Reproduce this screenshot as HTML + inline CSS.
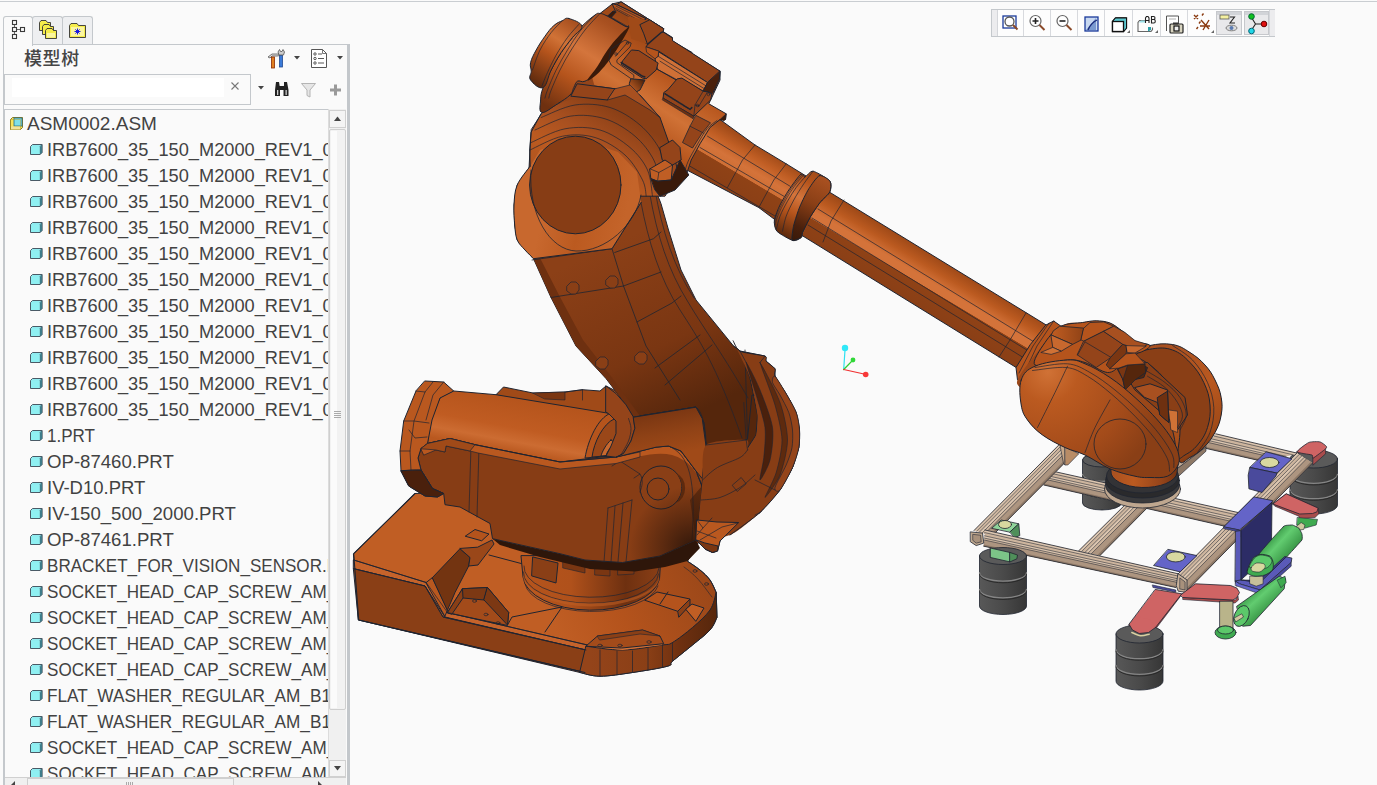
<!DOCTYPE html>
<html lang="zh">
<head>
<meta charset="utf-8">
<title>ASM0002.ASM</title>
<style>
html,body{margin:0;padding:0;}
body{width:1377px;height:785px;overflow:hidden;background:#fafafa;position:relative;font-family:"Liberation Sans","Noto Sans CJK SC",sans-serif;}
.abs{position:absolute;}
#topline{left:0;top:1px;width:1377px;height:1px;background:#c9cdd1;}
.tab{position:absolute;top:16px;height:29px;box-sizing:border-box;border:1px solid #c4c8cc;border-bottom:none;background:#eeeff1;border-radius:3px 3px 0 0;}
#tab1{left:3px;width:30px;background:#fafafa;height:30px;z-index:3;}
#tab2{left:32px;width:31px;}
#tab3{left:62px;width:31px;}
#panel{left:3px;top:44px;width:347px;height:741px;box-sizing:border-box;border-top:1px solid #c4c8cc;border-left:1px solid #c4c8cc;border-right:3px solid #c3c7cb;background:#fafafa;}
#title{left:24px;top:46.500px;font-size:18px;line-height:24px;color:#454545;font-weight:500;font-family:"Liberation Sans","Noto Sans CJK SC",sans-serif;letter-spacing:.6px;}
#search{left:4px;top:74px;width:247px;height:31px;box-sizing:border-box;border:1px solid #c4c8cc;background:#fafafa;}
#search i{position:absolute;left:7px;top:3px;width:212px;height:19px;background:#fff;}
#tree{left:4px;top:109px;width:325px;height:676px;box-sizing:border-box;border:1px solid #c4c8cc;border-bottom:none;background:#fafafa;overflow:hidden;}
.row{position:absolute;left:0;height:26px;line-height:26px;font-size:19px;color:#424242;white-space:nowrap;}
.row span{position:absolute;top:1px;display:inline-block;transform-origin:0 50%;}
.row svg{position:absolute;top:6px;}
#sb{left:328px;top:109px;width:18px;height:668px;background:#f0f0f0;border-left:1px solid #dcdcdc;box-sizing:border-box;}
#vp{left:0;top:0;}
</style>
</head>
<body>
<div id="topline" class="abs"></div>
<svg id="vp" class="abs" width="1377" height="785" viewBox="0 0 1377 785">
<defs>
<linearGradient id="gBal" gradientUnits="userSpaceOnUse" x1="520" y1="398" x2="510" y2="452"><stop offset="0" stop-color="#b5541c"/><stop offset=".55" stop-color="#c05c22"/><stop offset=".8" stop-color="#cc6c32"/><stop offset="1" stop-color="#b9581f"/></linearGradient>
<linearGradient id="gPed" gradientUnits="userSpaceOnUse" x1="523" y1="0" x2="660" y2="0"><stop offset="0" stop-color="#b5541c"/><stop offset=".35" stop-color="#b0511b"/><stop offset=".75" stop-color="#6e3010"/><stop offset="1" stop-color="#8a3f16"/></linearGradient>
<linearGradient id="gShoulder" gradientUnits="userSpaceOnUse" x1="515" y1="215" x2="620" y2="240"><stop offset="0" stop-color="#c8682e"/><stop offset=".25" stop-color="#c8682e"/><stop offset=".6" stop-color="#bb5a20"/><stop offset="1" stop-color="#c4642a"/></linearGradient>
<linearGradient id="gArm" gradientUnits="userSpaceOnUse" x1="600" y1="250" x2="680" y2="420"><stop offset="0" stop-color="#8c4017"/><stop offset=".6" stop-color="#7a3612"/><stop offset="1" stop-color="#55260c"/></linearGradient>
<linearGradient id="gTube" gradientUnits="userSpaceOnUse" x1="900" y1="236" x2="870" y2="286"><stop offset="0" stop-color="#a04a18"/><stop offset=".2" stop-color="#bb5a20"/><stop offset=".4" stop-color="#d4733a"/><stop offset=".52" stop-color="#d4733a"/><stop offset=".53" stop-color="#8f4216"/><stop offset=".92" stop-color="#8a3f16"/><stop offset="1" stop-color="#6e3010"/></linearGradient>
<linearGradient id="gTube1" gradientUnits="userSpaceOnUse" x1="770" y1="152" x2="738" y2="206"><stop offset="0" stop-color="#a04a18"/><stop offset=".2" stop-color="#c05e24"/><stop offset=".4" stop-color="#d4733a"/><stop offset=".55" stop-color="#cf6f35"/><stop offset=".56" stop-color="#8f4216"/><stop offset=".92" stop-color="#8a3f16"/><stop offset="1" stop-color="#6e3010"/></linearGradient>
<radialGradient id="gLobe" gradientUnits="userSpaceOnUse" cx="1050" cy="375" r="130"><stop offset="0" stop-color="#cc6a30"/><stop offset=".35" stop-color="#b9581f"/><stop offset="1" stop-color="#8c4017"/></radialGradient>
<linearGradient id="gDiscR" gradientUnits="userSpaceOnUse" x1="1150" y1="360" x2="1225" y2="430"><stop offset="0" stop-color="#b5541c"/><stop offset=".6" stop-color="#b9581f"/><stop offset="1" stop-color="#7a3612"/></linearGradient>
<linearGradient id="gCup" gradientUnits="userSpaceOnUse" x1="0" y1="0" x2="1" y2="0" gradientTransform="scale(1)"><stop offset="0" stop-color="#555"/><stop offset="1" stop-color="#3a3a3a"/></linearGradient>
<linearGradient id="gGreen" gradientUnits="userSpaceOnUse" x1="1262" y1="560" x2="1282" y2="580"><stop offset="0" stop-color="#2f9a3f"/><stop offset=".4" stop-color="#5cc86a"/><stop offset="1" stop-color="#2f8f3c"/></linearGradient>
</defs>
<g stroke="#1f2430" stroke-width="1" stroke-linejoin="round" stroke-linecap="round">
<g id="gripper" stroke-width=".8">
<defs><linearGradient id="gCupH" x1="0" y1="0" x2="1" y2="0"><stop offset="0" stop-color="#585858"/><stop offset=".5" stop-color="#4a4a4a"/><stop offset="1" stop-color="#363636"/></linearGradient></defs>
<path d="M1290.0 459V505A23.75 9 0 0 0 1337.5 505V459Z" fill="url(#gCupH)"/><ellipse cx="1313.75" cy="459" rx="23.75" ry="9" fill="#5a5a5a"/><path d="M1290.0 474.3333333333333A23.75 9 0 0 0 1337.5 474.3333333333333" fill="none" stroke="#858585" stroke-width="1.3"/><path d="M1290.0 475.93333333333334A23.75 9 0 0 0 1337.5 475.93333333333334" fill="none" stroke="#262626" stroke-width=".9"/><path d="M1290.0 489.6666666666667A23.75 9 0 0 0 1337.5 489.6666666666667" fill="none" stroke="#858585" stroke-width="1.3"/><path d="M1290.0 491.2666666666667A23.75 9 0 0 0 1337.5 491.2666666666667" fill="none" stroke="#262626" stroke-width=".9"/>
<path d="M1082.5 460V503A19.5 7 0 0 0 1121.5 503V460Z" fill="url(#gCupH)"/><ellipse cx="1102" cy="460" rx="19.5" ry="7" fill="#5a5a5a"/><path d="M1082.5 474.3333333333333A19.5 7 0 0 0 1121.5 474.3333333333333" fill="none" stroke="#858585" stroke-width="1.3"/><path d="M1082.5 475.93333333333334A19.5 7 0 0 0 1121.5 475.93333333333334" fill="none" stroke="#262626" stroke-width=".9"/><path d="M1082.5 488.6666666666667A19.5 7 0 0 0 1121.5 488.6666666666667" fill="none" stroke="#858585" stroke-width="1.3"/><path d="M1082.5 490.2666666666667A19.5 7 0 0 0 1121.5 490.2666666666667" fill="none" stroke="#262626" stroke-width=".9"/>
<path d="M1273.1 503.8L1286.2 493.8L1318.1 508.1L1318.8 513.8L1315.0 517.5L1300.0 518.8L1298.8 516.2L1275.0 506.2Z" fill="#a84c4c" stroke-width=".6"/>
<path d="M1273.1 503.8L1286.2 493.8L1318.1 508.1L1316.9 511.9L1312.5 513.5L1300.0 514.0Z" fill="#cf6464" />
<path d="M1297.5 517.5L1317.5 519.4L1316.2 525.0L1305.0 528.1L1296.9 525.0Z" fill="#3faa50" stroke-width=".6"/>
<path d="M1295.6 526.9L1301.2 522.5L1305.0 525.0L1303.8 529.4L1300.0 530.0Z" fill="#cfc8a0" stroke-width=".6"/>
<path d="M1215.8 433.8L1299.0 453.6L1263.0 461.4L1204.5 448.1Z" fill="#cdb59e" stroke="none"/><path d="M1215.8 433.8L1299.0 453.6L1293.2 454.8L1214.0 436.0Z" fill="#dcc6b0" stroke="none"/><path d="M1211.7 438.9L1286.0 456.4L1281.0 457.5L1210.1 440.9Z" fill="#dcc6b0" stroke="none"/><path d="M1208.8 442.6L1276.7 458.4L1263.0 461.4L1204.5 448.1Z" fill="#ad9580" stroke="none"/><path d="M1205.6 446.7L1266.6 460.6L1263.0 461.4L1204.5 448.1Z" fill="#8d7866" stroke="none"/><path d="M1215.8 433.8L1299.0 453.6" fill="none" stroke-width="0.8"/><path d="M1214.0 436.0L1293.2 454.8" fill="none" stroke-width="0.55"/><path d="M1211.7 438.9L1286.0 456.4" fill="none" stroke-width="0.55"/><path d="M1210.1 440.9L1281.0 457.5" fill="none" stroke-width="0.55"/><path d="M1208.8 442.6L1276.7 458.4" fill="none" stroke-width="0.55"/><path d="M1204.5 448.1L1263.0 461.4" fill="none" stroke-width="0.8"/>
<path d="M1173.2 462.5L1205.8 442.5L1206.0 446.9L1173.9 471.2Z" fill="#c4ad97" stroke-width=".6"/>
<path d="M1173.9 471.2L1206.0 446.9L1206.0 451.2L1174.5 480.0Z" fill="#8d7866" stroke-width=".6"/>
<path d="M1047.5 470.0L1238.0 512.5L1226.0 526.5L1043.8 485.0Z" fill="#cdb59e" stroke="none"/><path d="M1047.5 470.0L1238.0 512.5L1236.1 514.7L1046.9 472.4Z" fill="#dcc6b0" stroke="none"/><path d="M1046.2 475.4L1233.7 517.5L1232.0 519.5L1045.6 477.5Z" fill="#dcc6b0" stroke="none"/><path d="M1045.2 479.3L1230.6 521.2L1226.0 526.5L1043.8 485.0Z" fill="#ad9580" stroke="none"/><path d="M1044.1 483.5L1227.2 525.1L1226.0 526.5L1043.8 485.0Z" fill="#8d7866" stroke="none"/><path d="M1047.5 470.0L1238.0 512.5" fill="none" stroke-width="0.8"/><path d="M1046.9 472.4L1236.1 514.7" fill="none" stroke-width="0.55"/><path d="M1046.2 475.4L1233.7 517.5" fill="none" stroke-width="0.55"/><path d="M1045.6 477.5L1232.0 519.5" fill="none" stroke-width="0.55"/><path d="M1045.2 479.3L1230.6 521.2" fill="none" stroke-width="0.55"/><path d="M1043.8 485.0L1226.0 526.5" fill="none" stroke-width="0.8"/>
<path d="M1078.5 551.0L1138.0 492.0L1158.0 497.0L1100.0 555.5Z" fill="#cdb59e" stroke="none"/><path d="M1078.5 551.0L1138.0 492.0L1140.8 492.7L1081.5 551.6Z" fill="#dcc6b0" stroke="none"/><path d="M1085.0 552.4L1144.0 493.5L1147.0 494.2L1088.2 553.0Z" fill="#dcc6b0" stroke="none"/><path d="M1091.4 553.7L1150.0 495.0L1158.0 497.0L1100.0 555.5Z" fill="#ad9580" stroke="none"/><path d="M1097.4 555.0L1155.6 496.4L1158.0 497.0L1100.0 555.5Z" fill="#8d7866" stroke="none"/><path d="M1078.5 551.0L1138.0 492.0" fill="none" stroke-width="0.8"/><path d="M1081.5 551.6L1140.8 492.7" fill="none" stroke-width="0.55"/><path d="M1085.0 552.4L1144.0 493.5" fill="none" stroke-width="0.55"/><path d="M1088.2 553.0L1147.0 494.2" fill="none" stroke-width="0.55"/><path d="M1091.4 553.7L1150.0 495.0" fill="none" stroke-width="0.55"/><path d="M1100.0 555.5L1158.0 497.0" fill="none" stroke-width="0.8"/>
<path d="M974.0 530.5L1060.0 443.8L1066.0 461.5L992.0 536.0Z" fill="#cdb59e" stroke="none"/><path d="M974.0 530.5L1060.0 443.8L1060.8 446.2L976.5 531.3Z" fill="#dcc6b0" stroke="none"/><path d="M979.4 532.1L1061.8 449.1L1062.7 451.7L982.1 533.0Z" fill="#dcc6b0" stroke="none"/><path d="M984.8 533.8L1063.6 454.4L1066.0 461.5L992.0 536.0Z" fill="#ad9580" stroke="none"/><path d="M989.8 535.3L1065.3 459.4L1066.0 461.5L992.0 536.0Z" fill="#8d7866" stroke="none"/><path d="M974.0 530.5L1060.0 443.8" fill="none" stroke-width="0.8"/><path d="M976.5 531.3L1060.8 446.2" fill="none" stroke-width="0.55"/><path d="M979.4 532.1L1061.8 449.1" fill="none" stroke-width="0.55"/><path d="M982.1 533.0L1062.7 451.7" fill="none" stroke-width="0.55"/><path d="M984.8 533.8L1063.6 454.4" fill="none" stroke-width="0.55"/><path d="M992.0 536.0L1066.0 461.5" fill="none" stroke-width="0.8"/>
<path d="M1060.0 443.8L1065.0 446.9L1065.2 465.0L1063.8 463.8Z" fill="#c9a888" stroke-width=".6"/>
<path d="M1065.2 446.9L1078.8 453.8L1067.8 465.0L1065.2 465.0Z" fill="#b98c66" stroke-width=".6"/>
<path d="M991.9 528.1L1001.2 520.0L1018.8 523.8L1010.0 531.9Z" fill="#8fd49a" />
<path d="M1010.0 531.9L1018.8 523.8L1019.8 535.6L1015.0 537.5Z" fill="#4f8f5a" />
<ellipse cx="1005" cy="524.500" rx="6.500" ry="4" fill="#d8d8a0"/>
<path d="M1178.2 573.8L1296.9 453.1L1312.5 463.1L1187.6 590.0Z" fill="#cdb59e" stroke="none"/><path d="M1178.2 573.8L1296.9 453.1L1299.1 454.5L1179.6 576.0Z" fill="#dcc6b0" stroke="none"/><path d="M1181.1 578.6L1301.6 456.1L1303.9 457.6L1182.5 581.1Z" fill="#dcc6b0" stroke="none"/><path d="M1183.9 583.5L1306.3 459.1L1312.5 463.1L1187.6 590.0Z" fill="#ad9580" stroke="none"/><path d="M1186.5 588.0L1310.6 461.9L1312.5 463.1L1187.6 590.0Z" fill="#8d7866" stroke="none"/><path d="M1178.2 573.8L1296.9 453.1" fill="none" stroke-width="0.8"/><path d="M1179.6 576.0L1299.1 454.5" fill="none" stroke-width="0.55"/><path d="M1181.1 578.6L1301.6 456.1" fill="none" stroke-width="0.55"/><path d="M1182.5 581.1L1303.9 457.6" fill="none" stroke-width="0.55"/><path d="M1183.9 583.5L1306.3 459.1" fill="none" stroke-width="0.55"/><path d="M1187.6 590.0L1312.5 463.1" fill="none" stroke-width="0.8"/>
<path d="M985.0 530.0L1178.2 573.8L1175.8 587.5L983.7 546.2Z" fill="#cdb59e" stroke="none"/><path d="M985.0 530.0L1178.2 573.8L1177.8 576.0L984.8 532.6Z" fill="#dcc6b0" stroke="none"/><path d="M984.5 535.8L1177.3 578.7L1177.0 580.6L984.4 538.1Z" fill="#dcc6b0" stroke="none"/><path d="M984.2 540.0L1176.7 582.3L1175.8 587.5L983.7 546.2Z" fill="#ad9580" stroke="none"/><path d="M983.8 544.6L1176.0 586.1L1175.8 587.5L983.7 546.2Z" fill="#8d7866" stroke="none"/><path d="M985.0 530.0L1178.2 573.8" fill="none" stroke-width="0.8"/><path d="M984.8 532.6L1177.8 576.0" fill="none" stroke-width="0.55"/><path d="M984.5 535.8L1177.3 578.7" fill="none" stroke-width="0.55"/><path d="M984.4 538.1L1177.0 580.6" fill="none" stroke-width="0.55"/><path d="M984.2 540.0L1176.7 582.3" fill="none" stroke-width="0.55"/><path d="M983.7 546.2L1175.8 587.5" fill="none" stroke-width="0.8"/>
<path d="M970.6 531.9L982.5 533.1L983.8 543.1L976.2 545.6L970.6 541.9Z" fill="#bfa88f" />
<path d="M973.1 534.4L980.6 535.2L981.2 541.9L976.2 543.1L973.1 540.6Z" fill="#a8917c" stroke-width=".6"/>
<path d="M1178.2 573.8L1187.0 580.0L1187.0 592.5L1178.2 591.2L1176.4 586.2Z" fill="#c8b19a" />
<path d="M1180.1 578.1L1185.1 581.9L1185.1 590.0L1180.1 589.0Z" fill="#a8917c" stroke-width=".6"/>
<path d="M979.5 556V606A23.5 8.5 0 0 0 1026.5 606V556Z" fill="url(#gCupH)"/><ellipse cx="1003" cy="556" rx="23.5" ry="8.5" fill="#5a5a5a"/><path d="M979.5 572.6666666666666A23.5 8.5 0 0 0 1026.5 572.6666666666666" fill="none" stroke="#858585" stroke-width="1.3"/><path d="M979.5 574.2666666666667A23.5 8.5 0 0 0 1026.5 574.2666666666667" fill="none" stroke="#262626" stroke-width=".9"/><path d="M979.5 589.3333333333334A23.5 8.5 0 0 0 1026.5 589.3333333333334" fill="none" stroke="#858585" stroke-width="1.3"/><path d="M979.5 590.9333333333334A23.5 8.5 0 0 0 1026.5 590.9333333333334" fill="none" stroke="#262626" stroke-width=".9"/>
<path d="M990.6 548.1L1010.0 552.5L1010.0 561.9L990.6 557.5Z" fill="#7cc488" />
<path d="M1010.0 552.5L1017.5 555.0L1016.9 558.8L1010.0 561.9Z" fill="#4f8f5a" />
<path d="M1266.4 451.9L1292.0 458.8L1277.0 473.1L1250.1 467.5Z" fill="#6464c8" />
<path d="M1250.1 467.5L1277.0 473.1L1275.8 476.2L1262.0 492.5L1248.9 488.8L1248.2 475.6Z" fill="#4a4a9c" />
<ellipse cx="1269.500" cy="462.500" rx="9.400" ry="5" fill="#d8d8a0"/>
<path d="M1168.2 549.4L1197.0 555.6L1180.1 571.9L1153.9 565.6Z" fill="#6464c8" />
<ellipse cx="1175.750" cy="556.900" rx="9.400" ry="5" fill="#d8d8a0"/>
<path d="M1152.6 585.0L1175.8 590.0L1175.8 592.2L1153.2 587.5Z" fill="#4a4a9c" stroke-width=".6"/>
<path d="M1313.1 456.9L1325.6 447.5L1325.6 453.8L1313.1 465.0Z" fill="#a84c4c" stroke-width=".6"/>
<path d="M1296.9 451.9C1296.6 450.6 1306.5 443.5 1308.8 442.5C1311.1 441.5 1318.3 441.5 1320.0 441.9C1321.7 442.3 1325.6 445.5 1326.2 446.2C1326.8 446.9 1326.9 447.6 1325.6 448.8C1324.3 450.0 1314.5 457.5 1313.1 458.1C1311.7 458.7 1313.5 455.6 1311.9 455.0C1310.3 454.4 1297.2 453.1 1296.9 451.9Z" fill="#cf6464" />
<path d="M1250.8 500.0L1253.9 496.9L1272.6 500.6L1272.0 502.5L1239.5 530.0L1223.9 526.9Z" fill="#6464c8" />
<path d="M1223.9 526.9L1239.5 530.0L1239.5 531.9L1223.9 528.8Z" fill="#4a4a9c" stroke-width=".5"/>
<path d="M1272.0 502.5L1271.4 552.5L1240.8 580.0L1240.8 530.6Z" fill="#2c2c66" />
<path d="M1235.8 531.2L1240.8 530.6L1240.8 580.0L1237.0 586.2L1235.1 581.2Z" fill="#5a5ab8" />
<defs><linearGradient id="gGr1" gradientUnits="userSpaceOnUse" x1="1268" y1="540" x2="1290" y2="560"><stop offset="0" stop-color="#3a9a48"/><stop offset=".35" stop-color="#62cc70"/><stop offset="1" stop-color="#2f8a3c"/></linearGradient><linearGradient id="gGr2" gradientUnits="userSpaceOnUse" x1="1252" y1="590" x2="1272" y2="612"><stop offset="0" stop-color="#3a9a48"/><stop offset=".35" stop-color="#62cc70"/><stop offset="1" stop-color="#2f8a3c"/></linearGradient></defs>
<path d="M1283.1 526.9C1284.5 525.4 1285.7 525.5 1286.2 525.4C1286.7 525.3 1291.9 524.9 1292.5 525.0C1293.1 525.1 1298.3 527.7 1298.8 528.1C1299.3 528.5 1301.7 533.2 1301.9 533.8C1302.1 534.4 1302.7 538.8 1301.9 540.0C1301.1 541.2 1287.5 556.0 1286.2 557.5C1284.9 559.0 1276.4 570.1 1275.0 570.0C1273.6 569.9 1257.7 557.8 1258.1 555.6C1258.5 553.4 1281.7 528.4 1283.1 526.9Z" fill="url(#gGr1)" />
<path d="M1235.6 581.2L1239.4 583.8L1260.0 590.0L1291.2 562.5L1291.9 558.1L1286.2 556.9L1260.0 582.5L1241.2 580.0Z" fill="#5a5ab8" />
<path d="M1241.2 580.0L1260.0 582.5L1286.2 556.9L1285.0 556.2L1258.8 580.0Z" fill="#3a3a88" stroke-width=".6"/>
<path d="M1235.6 581.2L1239.4 583.8L1260.0 590.0L1260.0 594.0L1235.6 585.6Z" fill="#6464c8" stroke-width=".6"/>
<path d="M1260.0 590.0L1291.2 562.5L1291.2 566.2L1260.0 594.0Z" fill="#4a4a9c" stroke-width=".6"/>
<path d="M1250.0 576.2L1263.1 576.2L1263.1 583.8L1256.2 586.2L1250.0 583.8Z" fill="#c8c09a" stroke-width=".6"/>
<path d="M1247.5 570.0C1248.1 568.0 1250.8 560.9 1252.5 558.8C1254.2 556.7 1257.7 554.7 1260.0 554.4C1262.3 554.1 1268.3 555.1 1270.0 556.2C1271.7 557.3 1272.8 560.7 1273.1 562.5C1273.4 564.3 1273.6 568.3 1272.5 570.0C1271.4 571.7 1267.3 574.2 1265.0 575.0C1262.7 575.8 1257.3 576.4 1255.0 576.2C1252.7 576.0 1249.1 574.6 1248.1 573.8C1247.1 573.0 1246.9 572.0 1247.5 570.0Z" fill="#3faa50" />
<path d="M1249.4 566.9C1249.0 565.3 1252.9 559.7 1254.4 558.1C1255.9 556.5 1258.6 555.2 1260.6 555.0C1262.6 554.8 1267.9 556.0 1269.4 556.9C1270.9 557.8 1272.2 560.5 1271.9 561.9C1271.6 563.3 1269.4 566.4 1267.5 567.5C1265.6 568.6 1259.9 570.1 1257.5 570.0C1255.1 569.9 1249.8 568.5 1249.4 566.9Z" fill="#5cc86a" stroke-width=".6"/>
<path d="M1251.2 567.5C1251.7 566.4 1254.5 563.6 1256.2 563.1C1257.9 562.6 1262.6 563.2 1263.8 563.8C1265.0 564.4 1265.5 566.4 1265.0 567.5C1264.5 568.6 1261.7 571.4 1260.0 571.9C1258.3 572.4 1253.7 571.8 1252.5 571.2C1251.3 570.6 1250.7 568.6 1251.2 567.5Z" fill="#d8d8a0" stroke-width=".6"/>
<path d="M1236.8 606.2L1279.2 576.2L1285.5 578.8L1284.2 588.8L1250.5 625.5L1243.0 626.2Z" fill="url(#gGr2)" />
<ellipse cx="1241.500" cy="616" rx="7" ry="11" fill="#5cc86a" transform="rotate(25 1241.500 616)"/>
<path d="M1234.2 618.0L1241.8 613.8L1243.5 617.0L1236.0 621.8Z" fill="#d0c8a0" stroke-width=".6"/>
<path d="M1277.5 580.0L1285.0 576.2L1286.2 582.5L1281.2 587.5Z" fill="#3faa50" stroke-width=".6"/>
<path d="M1183.0 597.5L1235.5 600.0L1238.0 596.2L1238.5 600.0L1235.0 603.0L1183.0 599.5Z" fill="#a84c4c" stroke-width=".6"/>
<path d="M1180.5 595.0L1195.5 583.8L1230.5 585.5L1236.8 588.0L1239.5 592.5L1236.8 597.5L1233.0 600.0L1183.0 597.5Z" fill="#cf6464" />
<path d="M1156.0 591.2L1180.5 596.2L1154.5 630.5L1146.8 635.0L1136.8 635.0L1130.5 631.2L1128.8 625.5Z" fill="#a84c4c" stroke-width=".6"/>
<path d="M1155.5 589.5L1181.8 593.8L1155.5 627.5L1148.5 632.5L1139.2 633.5L1132.5 630.0L1129.2 624.5Z" fill="#cf6464" />
<path d="M1220.0 601.2L1233.0 601.2L1233.0 628.8L1220.0 628.8Z" fill="#b9b48a" />
<ellipse cx="1225.500" cy="632.500" rx="10.500" ry="6.500" fill="#3faa50"/>
<ellipse cx="1225.500" cy="630" rx="8" ry="4" fill="#5cc86a"/>
<path d="M1116.0 634V681A23.5 9 0 0 0 1163.0 681V634Z" fill="url(#gCupH)"/><ellipse cx="1139.5" cy="634" rx="23.5" ry="9" fill="#5a5a5a"/><path d="M1116.0 649.6666666666666A23.5 9 0 0 0 1163.0 649.6666666666666" fill="none" stroke="#858585" stroke-width="1.3"/><path d="M1116.0 651.2666666666667A23.5 9 0 0 0 1163.0 651.2666666666667" fill="none" stroke="#262626" stroke-width=".9"/><path d="M1116.0 665.3333333333334A23.5 9 0 0 0 1163.0 665.3333333333334" fill="none" stroke="#858585" stroke-width="1.3"/><path d="M1116.0 666.9333333333334A23.5 9 0 0 0 1163.0 666.9333333333334" fill="none" stroke="#262626" stroke-width=".9"/>
<path d="M1129.2 624.5L1132.5 630.0L1139.2 633.5L1148.5 632.5L1155.5 627.5L1150.5 620.0L1138.0 616.2Z" fill="#cf6464" stroke="none"/>
<path d="M1129.2 624.5L1132.5 630.0L1139.2 633.5L1148.5 632.5L1155.5 627.5" fill="none" />
<path d="M1131.8 632.5C1133.2 633.0 1137.6 635.5 1140.5 635.8C1143.4 636.1 1147.8 634.5 1149.2 634.2" fill="none" stroke="#d8d0a0" stroke-width="1.5"/>
<ellipse cx="1142.500" cy="489" rx="38" ry="19" fill="#bfa78f"/>
<ellipse cx="1142.500" cy="485" rx="37" ry="18" fill="#3a3a3c"/>
<ellipse cx="1142.500" cy="480.500" rx="37" ry="17.500" fill="#2a2a2c"/>
<ellipse cx="1142.500" cy="476" rx="36" ry="17" fill="#333336"/>
</g><g id="base">
<!-- base silhouette top face -->
<defs><linearGradient id="gTop" gradientUnits="userSpaceOnUse" x1="560" y1="640" x2="710" y2="570"><stop offset="0" stop-color="#c05e24"/><stop offset=".4" stop-color="#b4531c"/><stop offset="1" stop-color="#9a4719"/></linearGradient></defs><path d="M353.700 553.700L415 493.500L500 490L700 540L687.5 561.2C689.6 562.7 696.2 566.9 700.0 570.0C703.8 573.1 707.3 576.2 710.0 580.0C712.7 583.8 715.2 590.4 716.2 592.5L717.0 617.5C715.8 619.6 714.1 625.4 710.0 630.0C705.9 634.6 698.8 639.8 692.5 645.0C686.2 650.2 676.7 657.7 672.5 661.2C668.3 664.7 674.2 664.3 667.5 666.2C660.8 668.1 643.8 670.8 632.5 672.5C621.2 674.2 608.8 676.2 600.0 676.2C591.2 676.2 583.3 673.1 580.0 672.5L358.700 620Z" fill="url(#gTop)"/>
<!-- left chamfer strip -->
<path d="M353.700 560L426.200 582.500L447.500 612.500L587.500 645L586 650L445 617L425 586L353.700 568.700Z" fill="#c5632b"/>
<!-- front dark face -->
<path d="M353.700 568.700L425 586L443 617L586 650L587 672.500L585 672.500L358.700 620Z" fill="#8a3f16"/>
<!-- ramp strip & dark ramp face -->
<path d="M426.200 582.500L432.500 577.500L447.500 610L445 616Z" fill="#b9581f"/>
<path d="M432.500 577.500L460 548.700L470 557.500L468.700 566L455 592.500L447.500 610Z" fill="#733411"/>
<path d="M460 548.700L470 557.500L468.700 566L478 565L494 544L492 540L478 547Z" fill="#9a4719"/>
<!-- slot on top -->
<path d="M465.500 536L475 529.500L489 534L482 540.500Z" fill="#b4531c"/>
<!-- triangular pocket -->
<path d="M447.500 612.500L462.500 588.700L487.500 587.500L508.700 612.500L507.500 625Z" fill="#a34b1a"/>
<path d="M462.500 588.700L487.500 587.500L484 600L463 598Z" fill="#7c3813"/>
<path d="M487.500 587.500L508.700 612.500L507.500 625L484 600Z" fill="#7c3813"/>
<path d="M447.500 612.500L462.500 588.700L463 598L452 614Z" fill="#8a3f16"/>
<g fill="none" stroke-width=".7"><ellipse cx="474.500" cy="601" rx="2" ry="1.300"/><ellipse cx="486" cy="614.500" rx="2" ry="1.300"/><ellipse cx="498" cy="623" rx="2" ry="1.300"/></g>
<!-- lines on top face -->
<path d="M507.500 625L512 617L562 607M545 632L562 607" fill="none"/>
<path d="M489 555L523 564" fill="none"/>
<!-- right rim face -->
<defs><linearGradient id="gRim" gradientUnits="userSpaceOnUse" x1="590" y1="0" x2="718" y2="0"><stop offset="0" stop-color="#94441a"/><stop offset=".45" stop-color="#8a3f16"/><stop offset=".7" stop-color="#6e3010"/><stop offset="1" stop-color="#55260c"/></linearGradient></defs><path d="M586.2 646.2C592.2 646.8 609.8 650.2 622.5 650.0C635.2 649.8 654.2 646.2 662.5 645.0C670.8 643.8 667.5 645.4 672.5 642.5C677.5 639.6 686.2 632.9 692.5 627.5C698.8 622.1 706.0 615.8 710.0 610.0C714.0 604.2 715.2 595.4 716.2 592.5L717.0 617.5C715.8 619.6 714.1 625.4 710.0 630.0C705.9 634.6 698.8 639.8 692.5 645.0C686.2 650.2 676.7 657.7 672.5 661.2C668.3 664.7 674.2 664.3 667.5 666.2C660.8 668.1 643.8 670.8 632.5 672.5C621.2 674.2 608.8 676.2 600.0 676.2C591.2 676.2 583.3 673.1 580.0 672.5Z" fill="url(#gRim)"/>

<path d="M586 646L622.500 650L662.500 645L660 640L622 645L590 642Z" fill="#d17239" stroke="none"/>
<path d="M586 646L597.500 636L642.500 630L660 636L663.700 643.700L622 648Z" fill="#a34b1a"/>
<path d="M597.500 636L642.500 630L660 636L640 634L600 640Z" fill="#8a3f16" stroke-width=".6"/>
<g fill="none" stroke-width=".7"><ellipse cx="600" cy="645.500" rx="2.200" ry="1.300"/><ellipse cx="620" cy="645.500" rx="2.200" ry="1.300"/><ellipse cx="649" cy="642" rx="2.200" ry="1.300"/></g>
<path d="M600 650V676M617 651V674M632.500 651V672.500M648 648V670M662.500 645V667M672.500 642.500V661" fill="none" stroke-width=".7"/>
<!-- right detail blocks -->
<path d="M645 600L657 592L690 599L678 611Z" fill="#b4531c"/>
<path d="M678 611L690 599L690 605L679 617Z" fill="#8a3f16"/>
<path d="M686 609L692 604L704 608L696 621Z" fill="#c05e24"/>
<path d="M660 604L668 592" fill="none"/>
<g fill="none" stroke-width=".7"><ellipse cx="695" cy="571" rx="2" ry="1.300"/><ellipse cx="706.500" cy="584" rx="2" ry="1.300"/></g>
<path d="M687.5 561.2C689.6 562.7 696.2 566.9 700.0 570.0C703.8 573.1 707.3 576.2 710.0 580.0C712.7 583.8 715.2 590.4 716.2 592.5" fill="none"/>
<path d="M684 567C700 578 706 590 712 597" fill="none" stroke-width=".6"/>
<!-- outline -->
<path d="M353.700 553.700L415 493.500M353.700 553.700L358.700 620L585 672.500" fill="none" stroke-width="1.100"/>
<path d="M353.700 560L426.200 582.500L447.500 612.500L587.500 645M353.700 568.700L425 586L443 617L586 650" fill="none" stroke-width=".7"/>
<!-- pedestal -->
<path d="M521 556L523 577A68.500 35 0 0 0 659.500 579L661 556Z" fill="url(#gPed)"/>
<path d="M524 566A67 30 0 0 0 659 568" fill="none" stroke-width=".7"/>
<path d="M523.500 572A67 30 0 0 0 658.500 574" fill="none" stroke-width=".7"/>
<path d="M525 584A67 30 0 0 0 658 586" fill="none" stroke-width=".7"/><path d="M524 575A67 27 0 0 0 659 577L659.500 579A68.500 31 0 0 1 523 577Z" fill="#c05e24" stroke="none" opacity=".55"/>
<!-- blocks under turret -->
<path d="M533 557L558 563L556 583L532 576Z" fill="#8a3f16"/>
<path d="M563 560L585 565V573L563 568ZM595 567L610 568V576L595 575ZM618 568L634 567V574L618 575Z" fill="#7a3612" stroke-width=".6"/>
<!-- shadow under turret -->
<path d="M492.500 538.700L560 553.700L585 560L622.500 562.500L660 556L690 542.500L696 540L700 548L687.500 561L665 567L635 571.500L590 569L540 557L500 545Z" fill="#2e160a" stroke="none"/>
</g>
<g id="turret">
<!-- axis2 housing right big part (behind) -->
<path d="M696 407L733.500 346L740 351L765 356L766 361L775 368.700L775 376L786 393.700L796 412.500L799.500 430L798.700 447.500L792.500 467.500L780 490L760 512.500L738.700 522.500L720 541L717.500 551L712.500 552.500L705 549L696 540L690 500Z" fill="#8a3f16"/>
<!-- turret main body -->
<path d="M421 448.500L418 458L421 470L432.500 488.500L443.700 493.500L445 504.700L460 507L490 523.500L492.500 538.700L560 553.700L585 560L622.500 562.500L660 556L690 542.500L696 540L698 521L702 486L696 471L681 451L668.500 446L656 447L616 457L556 454.700L475 444.700L450 438.500L427.500 443.500Z" fill="#873d15"/>
<!-- right edge highlight of turret -->
<path d="M690 500L696 540L698 521L702 486Z" fill="#5e2a0e" stroke="none"/>
<!-- vertical ribs -->
<path d="M471 446L469 512M479 447L477 517M608 508L632 500M608 508L604 562M615 506L611 562M623 503L618 562M632 500L626 562" fill="none" stroke-width=".7"/>
<!-- ear highlight -->
<path d="M616 457L656 447L668.500 446L681 451L696 471L702 486C697 470 688 460 672 455C655 451 635 458 616 461Z" fill="#b9581f" stroke="none"/>
<path d="M616 457L656 447L668.500 446L681 451L696 471L702 486" fill="none"/>
<path d="M668.500 446C690 455 696 480 692 540" fill="none" stroke-width=".7"/>
<!-- boss -->
<ellipse cx="661" cy="487.500" rx="21" ry="21.500" fill="#8a3f16"/>
<path d="M676 473A21 21.500 0 0 1 676 503A14 16 0 0 0 676 473Z" fill="#5e2a0e" stroke="none"/>
<ellipse cx="658" cy="489" rx="11" ry="11" fill="#8a3f16"/>
<path d="M612 466L620 461L640 474L634 478M640 474C644 480 642 486 640 492" fill="none" stroke-width=".7"/>
</g>
<g id="balancer">
<!-- bracket bits behind -->
<path d="M496 394.700L503.500 387L533 393L565 392L582.500 389.700L600 391L606 386L618 392L633 417L610 420Z" fill="#a04a18"/>
<path d="M533 393L565 392L565 400L545 399Z" fill="#7a3612" stroke-width=".6"/>
<path d="M582.500 389.700V400M565 392L582.500 389.700" fill="none" stroke-width=".7"/>
<!-- cylinder -->
<path d="M453.700 391L496 394.700L610 413.500L622 420L625 438L617 455L560 462L475 444.700L450 438.500L427.500 443.500L430 420L440 398Z" fill="url(#gBal)"/>
<!-- cylinder end -->
<path d="M610 413.500C598 418 588 440 585 458L617 455C627 440 625 422 610 413.500Z" fill="#b5541c"/>
<path d="M614 419C603 424 594 442 592 457L617 455C626 442 624 426 614 419Z" fill="#9a4719"/>
<path d="M611 440C606 444 602 452 601 456L612 455C618 450 617 443 611 440Z" fill="#c8682e"/>
<path d="M615 444C610 447 607 452 606 456L614 455C619 451 619 447 615 444Z" fill="#7a3612"/>
<!-- left end cap -->
<path d="M425 381L443.700 382L453.700 391L440 398L432 420L427.500 443.500L421 448.500L418 458L421 470L432.500 488.500L443.700 493.500L437.500 497L425 496L408.700 486L401 471L400 451L403.700 421L416 391Z" fill="#b9581f"/>
<path d="M401 471L408.700 486L425 496L437.500 497L443.700 493.500L432.500 488.500L421 470L417 470Z" fill="#4a200c"/>
<path d="M433 382L425 392L414 421L410 451L411 470M443.700 382L433 395L426 420M416 391L425 392M403.700 421L414 421L429 423M409 430L415 438L427 437M400 451L410 451M401 471L411 470L421 470" fill="none" stroke-width=".7"/>
<path d="M421 448.500L427.500 443.500L450 438.500L475 444.700L560 462L616 457L640 452L640 457L616 463.500L560 469L478 453L470 451L446 446L445 452L436 450L424 455Z" fill="#b9581f" stroke-width=".7"/>
<!-- bottom bracket lip -->
<path d="M427.500 443.500L450 438.500L475 444.700L560 462L616 457L656 447" fill="none"/>
<path d="M421 448.500L427.500 443.500L450 438.500L475 444.700L470 451L446 446L445 452L436 450Z" fill="#a04a18" stroke-width=".7"/>
</g>
<g id="forearm">
<path d="M826 190L1047 325.500L1017 368L798 233Z" fill="url(#gTube)"/>
<path d="M818 209L1035 342.500M812 218L1030 352M808 225L1024 358" fill="none" stroke-width=".7"/>
<path d="M844 200L831 221L823 242M1026 313L1010 340L999 357" fill="none" stroke-width=".7"/>
<path d="M711 113L755 145L786 163.700L806 176L778 222L758.700 207.500L683 168L694 137Z" fill="url(#gTube1)"/>
<path d="M707.5 136.2L790.0 186.2M700.0 147.5L783.8 196.2M690.0 166.2L777.5 217.5M755.0 145.0L742.5 160.0L727.5 187.5M786.2 163.8L773.8 180.0L758.8 207.5" fill="none" stroke-width=".7"/>
<defs><linearGradient id="gF1" gradientUnits="userSpaceOnUse" x1="818" y1="172" x2="784" y2="238"><stop offset="0" stop-color="#a04a18"/><stop offset=".18" stop-color="#b5541c"/><stop offset=".42" stop-color="#d4753c"/><stop offset=".65" stop-color="#b5541c"/><stop offset="1" stop-color="#55260c"/></linearGradient><linearGradient id="gF2" gradientUnits="userSpaceOnUse" x1="826" y1="180" x2="795" y2="240"><stop offset="0" stop-color="#a85020"/><stop offset=".4" stop-color="#8a3f16"/><stop offset=".8" stop-color="#4a200c"/><stop offset="1" stop-color="#3a1a0a"/></linearGradient></defs>
<path d="M800.6 174.4C802.5 172.9 803.5 177.3 805.0 176.9C806.5 176.5 810.2 170.7 813.1 171.2C816.0 171.7 828.1 178.8 830.0 181.2C831.9 183.6 831.0 189.4 829.8 191.9C828.6 194.4 822.3 199.5 820.0 202.5C817.7 205.5 812.0 214.0 810.0 217.5C808.0 221.0 803.5 230.2 802.5 232.5C801.5 234.8 802.3 236.6 801.2 237.5C800.1 238.4 795.9 241.3 793.1 240.6C790.3 239.9 779.1 233.6 776.9 231.2C774.7 228.8 774.0 223.1 774.4 220.0C774.8 216.9 778.3 208.5 780.0 205.0C781.7 201.5 786.4 193.6 788.8 190.0C791.2 186.4 798.7 175.9 800.6 174.4Z" fill="url(#gF1)" />
<path d="M819.4 175.6C821.9 174.7 828.8 179.3 830.0 181.2C831.2 183.1 831.0 189.4 829.8 191.9C828.6 194.4 822.3 199.5 820.0 202.5C817.7 205.5 812.0 214.0 810.0 217.5C808.0 221.0 803.5 230.2 802.5 232.5C801.5 234.8 802.3 236.6 801.2 237.5C800.1 238.4 794.2 240.6 793.1 240.6C792.0 240.6 791.8 239.3 791.9 237.5C792.0 235.7 792.9 228.7 793.8 225.0C794.7 221.3 798.2 210.4 800.0 206.2C801.8 202.0 806.5 192.4 808.8 188.8C811.1 185.2 816.9 176.5 819.4 175.6Z" fill="url(#gF2)" />
<path d="M813.1 171.2C811.5 173.3 807.0 179.0 803.8 183.8C800.6 188.6 796.7 194.6 793.8 200.0C790.9 205.4 788.1 211.0 786.2 216.2C784.3 221.4 783.1 228.7 782.5 231.2" fill="none" stroke-width=".7"/>
<path d="M805.0 176.9C803.5 178.7 799.1 183.4 796.2 187.5C793.3 191.6 790.2 196.4 787.5 201.2C784.8 206.0 781.8 211.6 780.0 216.2C778.2 220.8 777.1 226.7 776.5 228.8" fill="none" stroke-width=".7"/>
<path d="M803.1 175.6C801.6 177.4 797.3 182.1 794.4 186.2C791.5 190.3 788.3 195.2 785.6 200.0C782.9 204.8 779.9 210.8 778.1 215.0C776.3 219.2 775.5 223.3 775.0 225.0" fill="none" stroke-width=".6"/>
<path d="M801.9 175.0C800.4 176.8 796.0 181.5 793.1 185.6C790.2 189.7 787.1 194.6 784.4 199.4C781.7 204.2 778.6 210.6 776.9 214.4C775.2 218.2 774.8 221.2 774.4 222.5" fill="none" stroke-width=".6"/>
<path d="M1046 325L1053.700 321L1061 326.200L1040 350L1022 378L1017.500 380L1016 367.500L1030 345Z" fill="#b5541c"/>
<path d="M1049 323L1033 346L1019 373M1053.700 321L1037 346L1023 376" fill="none" stroke-width=".7"/>
</g><g id="arm">
<!-- main arm body -->
<path d="M531 150L530.200 166.200L517.200 185L514 205L514.700 225L517.200 240L533.500 258.700L551 297.500L576 346L606 378.500L626 404.700L633.500 417L696 407L703.700 422.500L706 445L746 440L747.500 448L756 435L757.500 415L750 378L740 351L733.500 346L696 300L681 270L668.500 230L661 203.700L640 150L560 140Z" fill="url(#gArm)"/>
<!-- lower housing continuation -->
<path d="M633.500 417L696 407L703.700 422.500L706 445L702 470L696 471L681 451L668.500 446L656 447L640 450Z" fill="#6e3010"/>
<path d="M706 445L746 440L747.500 438.700L752 395L790 400L799.500 430L798.700 447.500L792.500 467.500L780 490L760 512.500L738.700 522.500L700 521L702 486Z" fill="#83391300"/>
<!-- left thin dark strip (side face of arm) -->
<path d="M517.200 240L533.500 258.700L551 297.500L576 346L606 378.500L626 404.700L633.500 417L640 416L610 375L583 340L560 297L540 258Z" fill="#6e3010" stroke="none"/>
<!-- internal edges -->
<path d="M532 260L612 248.700L641 202.500M551 297.500L623.500 286M612 248.700L623.500 286L646 346L680 400M614.700 252.500L653.500 238.700L661 232M623.500 286L661 272M637 322L672 303L681 296M655 368L700 335M665 385L712 345" fill="none" stroke-width=".8"/>
<path d="M641 202.500C648 240 660 280 680 310C698 338 716 364 742 438M650 195C657 235 668 270 688 302C706 332 724 356 748 398M655 190C662 230 674 268 694 298" fill="none" stroke-width=".7"/>
<path d="M633.500 417L696 407C703 412 706 430 706 445L746 440L747.500 438.700M747.500 438.700L745 350M706 445L702 486" fill="none" stroke-width=".8"/>
<defs><linearGradient id="gLow" gradientUnits="userSpaceOnUse" x1="660" y1="412" x2="668" y2="455"><stop offset="0" stop-color="#7a3612"/><stop offset=".5" stop-color="#8f4216"/><stop offset="1" stop-color="#a04a18"/></linearGradient></defs>
<path d="M606.0 386.0L616.0 393.5L626.0 404.8L633.5 417.2L634.8 428.5L631.0 441.0L623.5 453.5L616.0 457.2L606.0 456.0L611.0 446.0L616.0 433.5L616.0 421.0L608.5 413.5L606.0 412.2Z" fill="#94441a" />
<path d="M633.5 417.2L696.0 407.2L702.2 418.5L706.0 446.0L702.2 478.5L696.0 471.0L681.0 451.0L668.5 446.0L656.0 447.2L616.0 457.2L623.5 453.5L631.0 441.0L634.8 428.5Z" fill="url(#gLow)" />
<path d="M628.5 418.5C628.9 420.2 631.0 424.8 631.0 428.5C631.0 432.2 630.2 436.6 628.5 441.0C626.8 445.4 622.2 452.5 621.0 454.8" fill="none" stroke-width=".7"/>
<!-- bolts -->
<g fill="#8a3f16" stroke-width=".7"><path d="M567 286l4-4h5l3 3v5l-3 4h-5l-4-3z"/><path d="M606 280l4-4h5l3 3v5l-3 4h-5l-4-3z"/><path d="M596 361l4-4h5l3 3v5l-3 4h-5l-4-3z"/><path d="M635 356l4-4h5l3 3v5l-3 4h-5l-4-3z"/></g>
<!-- right bulge rings -->
<path d="M732.5 340.0C731.3 336.9 736.2 349.3 740.0 351.2C743.8 353.1 761.9 355.0 765.0 356.2C768.1 357.4 765.0 359.7 766.2 361.2C767.4 362.7 774.0 367.1 775.0 368.8C776.0 370.6 773.7 373.3 775.0 376.2C776.3 379.1 783.7 389.6 786.2 393.8C788.7 398.0 794.6 408.3 796.2 412.5C797.8 416.7 799.2 425.9 799.5 430.0C799.8 434.1 799.6 443.1 798.8 447.5C798.0 451.9 794.7 462.5 792.5 467.5C790.3 472.5 783.8 484.8 780.0 490.0C776.2 495.2 765.8 507.2 760.0 512.5C754.2 517.8 737.0 532.4 730.0 535.0C723.0 537.6 703.2 541.4 700.0 535.0C696.8 528.6 701.8 490.5 702.5 480.0C703.2 469.5 701.1 449.7 706.2 445.0C711.3 440.3 741.4 439.4 746.2 440.0C751.0 440.6 746.3 450.6 747.5 450.0C748.7 449.4 755.0 439.1 756.2 435.0C757.4 430.9 758.2 421.7 757.5 415.0C756.8 408.3 752.9 386.2 750.0 377.5C747.1 368.8 733.7 343.1 732.5 340.0Z" fill="#873d15" stroke="none" />
<path d="M733.2 340.8C734.0 342.0 736.3 349.4 740.0 351.2C743.7 353.0 761.9 355.0 765.0 356.2C768.1 357.4 765.0 359.7 766.2 361.2C767.4 362.7 774.0 367.1 775.0 368.8C776.0 370.6 773.7 373.3 775.0 376.2C776.3 379.1 783.7 389.6 786.2 393.8C788.7 398.0 794.6 408.3 796.2 412.5C797.8 416.7 799.2 425.9 799.5 430.0C799.8 434.1 799.6 443.1 798.8 447.5C798.0 451.9 794.7 462.5 792.5 467.5C790.3 472.5 783.8 484.8 780.0 490.0C776.2 495.2 765.8 507.2 760.0 512.5C754.2 517.8 733.5 532.4 730.0 535.0" fill="none" />
<path d="M775.0 376.2C776.8 377.7 783.4 389.0 786.2 393.8C789.0 398.6 794.4 407.7 796.2 412.5C798.0 417.3 799.2 425.3 799.5 430.0C799.8 434.7 799.7 442.5 798.8 447.5C797.9 452.5 795.0 461.8 792.5 467.5C790.0 473.2 782.3 487.3 780.0 490.0C777.7 492.7 774.2 490.8 775.0 487.5C775.8 484.2 783.9 470.3 786.2 465.0C788.5 459.7 791.2 452.2 792.0 447.5C792.8 442.8 792.9 434.7 792.5 430.0C792.1 425.3 790.5 417.2 788.8 412.5C787.1 407.8 782.2 399.0 780.0 395.0C777.8 391.0 773.2 385.0 772.5 382.5C771.8 380.0 773.2 374.7 775.0 376.2Z" fill="#94441a" stroke-width=".7"/>
<path d="M746.2 362.5C746.7 361.8 756.5 381.3 760.0 390.0C763.5 398.7 771.2 418.2 772.5 427.5C773.8 436.8 771.7 453.0 770.0 460.0C768.3 467.0 760.8 480.3 760.0 480.0C759.2 479.7 763.1 464.5 763.8 457.5C764.5 450.5 766.0 435.8 765.0 427.5C764.0 419.2 758.7 403.7 756.2 395.0C753.7 386.3 745.7 363.2 746.2 362.5Z" fill="#4a200c" stroke-width=".6"/>
<path d="M760.0 362.5C760.7 362.2 776.3 392.2 780.0 402.5C783.7 412.8 787.5 430.3 787.5 440.0C787.5 449.7 783.0 467.3 780.0 475.0C777.0 482.7 765.5 497.8 765.0 497.5C764.5 497.2 773.9 480.2 776.2 472.5C778.5 464.8 782.2 449.0 782.0 440.0C781.8 431.0 777.9 415.3 775.0 405.0C772.1 394.7 759.3 362.8 760.0 362.5Z" fill="#5e2a0e" stroke-width=".6"/>
<path d="M740.0 351.2L746.2 362.5M765.0 356.2L760.0 362.5M706.2 445.0L746.2 440.0L747.5 450.0M746.2 440.0L743.8 402.5" fill="none" stroke-width=".7"/>
<path d="M702.5 480.0C705.0 477.9 711.2 471.2 717.5 467.5C723.8 463.8 735.0 460.4 740.0 457.5C745.0 454.6 746.2 451.2 747.5 450.0" fill="none" stroke-width=".7"/>
<path d="M701.2 500.0C704.3 499.6 713.5 499.6 720.0 497.5C726.5 495.4 734.2 491.2 740.0 487.5C745.8 483.8 752.5 477.1 755.0 475.0" fill="none" stroke-width=".7"/>
<path d="M732.5 485.0L741.2 477.5L746.2 483.8L737.5 491.2Z" fill="none" stroke-width=".7"/>
<path d="M755.0 480.0L775.0 490.0M760.0 512.5L755.0 515.0" fill="none" stroke-width=".7"/>
</g>
<g id="elbow">
<defs><linearGradient id="gE1" gradientUnits="userSpaceOnUse" x1="580" y1="14" x2="536" y2="84"><stop offset="0" stop-color="#a04a18"/><stop offset=".12" stop-color="#a85020"/><stop offset=".4" stop-color="#d07236"/><stop offset=".6" stop-color="#b5541c"/><stop offset="1" stop-color="#5e2a0e"/></linearGradient>
<linearGradient id="gE2" gradientUnits="userSpaceOnUse" x1="620" y1="10" x2="556" y2="112"><stop offset="0" stop-color="#9a4719"/><stop offset=".15" stop-color="#a85020"/><stop offset=".45" stop-color="#d4753c"/><stop offset=".7" stop-color="#b5541c"/><stop offset="1" stop-color="#6e3010"/></linearGradient>
<linearGradient id="gE3" gradientUnits="userSpaceOnUse" x1="690" y1="50" x2="620" y2="160"><stop offset="0" stop-color="#8f4216"/><stop offset=".25" stop-color="#b5541c"/><stop offset=".5" stop-color="#d07236"/><stop offset=".75" stop-color="#b5541c"/><stop offset="1" stop-color="#8a3f16"/></linearGradient>
<linearGradient id="gE4" gradientUnits="userSpaceOnUse" x1="600" y1="100" x2="540" y2="200"><stop offset="0" stop-color="#8a3f16"/><stop offset=".3" stop-color="#a85020"/><stop offset=".55" stop-color="#bb5a20"/><stop offset="1" stop-color="#a85020"/></linearGradient></defs>
<path d="M542.5 112.5L571.2 96.2L577.5 83.8L615.0 88.8L640.0 95.0L660.0 117.5L675.0 140.0L680.0 160.0L675.0 180.0L665.0 196.2L527.5 196.2L530.0 150.0L531.2 130.0Z" fill="url(#gE4)" />
<path d="M583.8 81.2L596.2 68.8L610.0 46.2L625.0 27.5L636.2 23.8L650.0 37.5L672.5 41.2L720.0 71.2L720.0 80.0L708.8 103.8L726.2 113.8L725.5 119.5L720.0 119.5L710.0 127.5L700.0 143.8L691.2 160.0L687.5 171.2L685.0 176.2L680.0 180.0L675.0 160.0L660.0 117.5L640.0 95.0L615.0 88.8L577.5 83.8Z" fill="url(#gE3)" />
<path d="M570.0 75.0L590.0 70.0L595.0 87.5L572.5 98.8L557.5 103.8Z" fill="#94441a" stroke="none"/>
<path d="M600.0 13.5L612.5 3.8L621.2 1.9L663.8 28.8L662.5 31.2L672.5 37.5L672.5 41.2L692.1 52.5L692.1 58.8L657.5 52.5L647.5 43.8L645.0 42.5L643.1 30.0L638.8 23.8L628.8 26.9L625.0 26.2L607.5 16.2Z" fill="#a04a18" />
<path d="M621.2 1.9L663.8 28.8L662.5 31.2L647.5 43.8L645.0 42.5L643.1 30.0L638.8 23.8L646.2 18.8L617.5 5.0Z" fill="#9a4719" />
<path d="M612.5 3.8L617.5 5.0L646.2 18.8L638.8 23.8L628.8 26.9L625.0 26.2L610.0 16.9L615.0 11.2Z" fill="#b5541c" />
<path d="M616.2 6.2L643.8 20.0M615.0 7.8L641.2 21.5" fill="none" stroke-width=".6"/>
<path d="M616.2 9.8L635.0 20.0L627.5 26.5L610.6 16.9Z" fill="url(#gE3)" stroke-width=".7"/>
<path d="M607.5 16.2L613.1 11.0L616.2 11.9L611.2 17.5Z" fill="#3a1a0a" />
<path d="M581.9 26.2C586.4 21.7 591.4 17.5 595.0 15.0C598.6 12.5 597.5 13.3 600.0 13.5C602.5 13.7 602.5 13.7 607.5 16.2C612.5 18.7 620.7 24.1 625.0 26.2C629.3 28.3 629.8 24.9 628.8 26.9C627.8 28.9 624.3 31.1 620.0 36.2C615.7 41.3 612.5 45.2 607.5 52.5C602.5 59.8 599.5 66.8 595.0 72.5C590.5 78.2 588.5 79.5 585.0 81.2C581.5 82.9 579.7 79.9 577.5 81.2C575.3 82.5 575.3 84.7 573.8 87.5C572.3 90.3 573.3 91.7 570.0 95.0C566.7 98.3 563.1 100.3 557.5 103.8C551.9 107.3 545.3 113.3 541.9 112.5C538.5 111.7 540.4 105.0 540.6 100.0C540.8 95.0 541.0 93.5 543.1 87.5C545.2 81.5 547.6 77.0 551.2 70.0C554.8 63.0 556.9 59.0 561.2 52.5C565.5 46.0 568.4 42.8 572.5 37.5C576.6 32.2 577.4 30.7 581.9 26.2Z" fill="url(#gE2)" />
<path d="M568.8 18.5C564.9 17.4 565.5 19.2 562.5 20.6C559.5 22.0 557.3 22.5 553.8 25.6C550.3 28.7 548.5 31.3 545.0 36.2C541.5 41.1 539.1 44.7 536.2 50.0C533.3 55.3 531.6 58.3 530.6 62.5C529.6 66.7 531.2 67.7 531.2 71.2C531.2 74.7 528.2 76.7 530.6 80.0C533.0 83.3 539.0 89.5 543.1 87.5C547.2 85.5 547.6 77.0 551.2 70.0C554.8 63.0 556.9 59.0 561.2 52.5C565.5 46.0 568.4 42.8 572.5 37.5C576.6 32.2 582.6 30.0 581.9 26.2C581.2 22.4 572.7 19.6 568.8 18.5Z" fill="url(#gE1)" />
<path d="M562.5 20.6C560.6 22.6 555.0 27.6 551.2 32.5C547.5 37.4 543.1 43.8 540.0 50.0C536.9 56.2 533.8 66.7 532.5 70.0" fill="none" stroke-width=".7"/>
<path d="M578.8 24.4C576.9 26.6 571.3 32.4 567.5 37.5C563.7 42.6 559.5 49.2 556.2 55.0C552.9 60.8 549.9 67.3 547.5 72.5C545.1 77.7 542.8 83.9 541.9 86.2" fill="none" stroke-width=".7"/>
<path d="M595.0 15.0C592.5 17.7 584.6 25.4 580.0 31.2C575.4 37.0 571.5 43.5 567.5 50.0C563.5 56.5 559.5 63.3 556.2 70.0C552.9 76.7 549.4 85.3 547.5 90.0C545.6 94.7 545.4 96.8 545.0 98.1" fill="none" stroke-width=".7"/>
<path d="M600.0 13.5C597.5 16.2 589.8 23.9 585.0 30.0C580.2 36.1 575.4 43.3 571.2 50.0C567.0 56.7 563.3 63.3 560.0 70.0C556.7 76.7 553.1 85.3 551.2 90.0C549.3 94.7 549.2 96.8 548.8 98.1" fill="none" stroke-width=".7"/>
<path d="M628.8 26.9C627.1 27.9 623.1 31.6 618.8 36.2C614.5 40.8 611.8 44.0 607.5 50.0C603.2 56.0 601.5 60.2 597.5 66.2C593.5 72.2 587.8 78.2 587.5 80.0C587.2 81.8 592.2 78.5 596.2 75.0C600.2 71.5 603.0 68.3 607.5 62.5C612.0 56.7 614.8 52.5 618.8 46.2C622.8 39.9 625.5 35.1 627.5 31.2C629.5 27.3 630.5 25.9 628.8 26.9Z" fill="#3a1a0a" stroke="none"/>
<path d="M627.5 16.2L647.5 20.6L648.8 44.4L631.2 38.8Z" fill="#a04a18" stroke="none"/>
<path d="M650.0 20.0L663.8 28.8L663.1 31.9L672.5 38.1L672.5 40.6L720.0 71.2L719.4 78.8L707.5 82.5L658.8 51.2L646.2 46.9L647.5 44.4L643.8 33.8L640.0 25.0Z" fill="#94441a" />
<path d="M647.5 44.4L661.2 32.5L663.1 31.9" fill="none" stroke-width="1.4"/>
<path d="M658.8 51.9L707.5 82.5L703.1 91.2L681.9 78.8L676.2 80.0L657.5 69.4L655.0 58.8L658.1 56.2Z" fill="#cf7036" />
<path d="M658.1 56.2L705.6 85.6M660.0 61.2L704.4 88.8M657.5 69.4L677.5 80.0" fill="none" stroke-width=".7"/>
<path d="M646.2 46.9L658.8 51.2L658.1 56.2L655.0 58.8L646.9 52.5Z" fill="#b5541c" stroke-width=".7"/>
<path d="M720.0 71.2L719.4 78.8L713.1 92.5L711.9 93.8L707.5 91.9L703.1 91.2L707.5 82.5Z" fill="#4a200c" />
<path d="M631.9 50.0L638.8 50.6L658.1 63.1L656.2 70.0L646.2 78.8L642.5 78.1L621.2 64.4L622.5 61.2Z" fill="#94441a" />
<path d="M621.2 62.5L642.5 76.2L645.0 76.9" fill="none" stroke-width="1.6" stroke-dasharray="1.2 1"/>
<path d="M610.6 49.4L625.0 40.0L631.2 43.1L630.0 46.9L616.9 60.0L616.9 62.5L633.8 75.0L633.8 77.5L630.0 82.5M610.6 49.4L608.8 60.0L611.2 65.0L631.2 78.8M627.5 42.5L615.6 56.2" fill="none" stroke-width=".8"/>
<circle cx="627.5" cy="43" r="1.3" fill="none" stroke-width=".6"/><circle cx="616" cy="54" r="1.3" fill="none" stroke-width=".6"/>
<defs><linearGradient id="gRec" gradientUnits="userSpaceOnUse" x1="630" y1="90" x2="642" y2="80"><stop offset="0" stop-color="#c05e24"/><stop offset="1" stop-color="#55260c"/></linearGradient></defs>
<path d="M631.2 78.8L645.0 80.0L640.0 90.0L633.8 93.1L629.4 90.0L629.4 83.8Z" fill="url(#gRec)" />
<path d="M677.5 78.8L681.9 78.1L703.1 91.2L707.5 91.9L711.9 93.8L710.6 100.0L693.8 116.2L663.1 98.1L663.8 92.5L667.5 90.0Z" fill="#94441a" />
<path d="M665.0 93.8L690.0 109.4L691.9 107.5" fill="none" stroke-width="1.6" stroke-dasharray="1.2 1"/>
<path d="M663.1 98.1L693.8 116.2L693.1 118.8L662.5 100.0Z" fill="#6e3010" stroke-width=".6"/>
<path d="M703.1 91.2L695.0 105.0L693.8 116.2M707.5 91.9L698.8 106.2M695.0 105.0L698.8 106.2" fill="none" stroke-width=".7"/>
<circle cx="708.5" cy="94.5" r="1.3" fill="none" stroke-width=".6"/><circle cx="697.5" cy="105.5" r="1.3" fill="none" stroke-width=".6"/>
<path d="M696.2 115.5L710.5 122.8L702.5 132.5L692.5 148.0L682.5 142.5L690.0 126.2Z" fill="#94441a" stroke-width=".8"/>
<path d="M690.0 126.2L703.8 133.2" fill="none" stroke-width=".7"/>
<path d="M720.0 119.5L726.2 113.8L725.5 119.5L723.8 121.0Z" fill="#3a1a0a" stroke-width=".6"/>
<path d="M717.0 120.5C715.3 121.9 710.3 124.7 707.0 128.8C703.7 132.9 700.1 139.6 697.0 145.0C693.9 150.4 690.3 156.6 688.2 161.2C686.1 165.8 685.1 170.6 684.5 172.5" fill="none" stroke-width=".7"/>
<path d="M577.5 83.8L615.0 88.8L607.5 100.0L571.2 96.2Z" fill="#94441a" />
<path d="M615.0 88.8L630.0 85.0L636.2 91.2L660.0 117.5L650.0 110.0L625.0 95.0L607.5 100.0Z" fill="#a85020" stroke-width=".7"/>
<path d="M541.2 117.5C546.8 115.4 563.5 106.7 575.0 105.0C586.5 103.3 599.2 104.2 610.0 107.5C620.8 110.8 631.7 117.9 640.0 125.0C648.3 132.1 655.8 141.7 660.0 150.0C664.2 158.3 664.2 170.8 665.0 175.0" fill="none" stroke-width=".7"/>
<path d="M535.0 130.0C540.8 127.7 558.3 118.1 570.0 116.2C581.7 114.3 594.2 115.5 605.0 118.8C615.8 122.1 626.9 129.3 635.0 136.2C643.1 143.1 649.6 151.9 653.8 160.0C658.0 168.1 659.0 180.8 660.0 185.0" fill="none" stroke-width=".7"/>
<path d="M531.2 142.5C536.8 140.2 553.5 130.9 565.0 128.8C576.5 126.7 589.2 126.9 600.0 130.0C610.8 133.1 622.1 140.8 630.0 147.5C637.9 154.2 643.8 161.9 647.5 170.0C651.2 178.1 651.7 191.8 652.5 196.2" fill="none" stroke-width=".7"/>
<path d="M530.0 150.0C535.4 147.7 551.7 138.3 562.5 136.2C573.3 134.1 584.6 134.4 595.0 137.5C605.4 140.6 617.1 147.9 625.0 155.0C632.9 162.1 639.0 173.1 642.5 180.0C646.0 186.9 645.6 193.5 646.2 196.2" fill="none" stroke-width=".7"/>
<path d="M660.0 147.5L672.5 140.0L680.0 147.5L681.2 160.0L672.5 165.0L662.5 160.0Z" fill="#94441a" />
<path d="M650.0 168.8L665.0 160.0L672.5 165.0L671.2 180.0L657.5 181.2L651.2 178.8Z" fill="#c05e24" />
<path d="M651.2 178.8L657.5 181.2L671.2 180.0L680.0 160.0L688.8 175.0L675.0 190.0L660.0 196.2L655.0 190.0Z" fill="#3a1a0a" />
<path d="M650.0 168.8L658.8 172.5L657.5 181.2M658.8 172.5L672.5 165.0" fill="none" stroke-width=".7"/>
</g><g id="disc"><!-- shoulder light region -->
<path d="M530.2 166.2C528.0 169.3 519.9 178.5 517.2 185.0C514.5 191.5 514.4 198.3 514.0 205.0C513.6 211.7 514.2 219.2 514.7 225.0C515.2 230.8 515.5 235.8 517.2 240.0C518.9 244.2 522.3 246.9 525.0 250.0C527.7 253.1 532.1 257.2 533.5 258.7L612 248.700L641 202.500L637 172L618 152L575 138L540 150L530.200 166.200Z" fill="url(#gShoulder)" stroke="none"/>
<path d="M541 113.700L531 132.500L529.700 150L530.200 166.200" fill="none"/><path d="M530.2 166.2C528.0 169.3 519.9 178.5 517.2 185.0C514.5 191.5 514.4 198.3 514.0 205.0C513.6 211.7 514.2 219.2 514.7 225.0C515.2 230.8 515.5 235.8 517.2 240.0C518.9 244.2 522.3 246.9 525.0 250.0C527.7 253.1 532.1 257.2 533.5 258.7L612 248.700L641 202.500" fill="none"/><!-- disc -->
<ellipse cx="575.300" cy="185" rx="45.700" ry="48.800" fill="#873d15"/>
<path d="M531 170C528 215 550 250 576 251C605 252 636 225 641 195" fill="none" stroke-width=".8"/>
</g><g id="wrist">
<defs><radialGradient id="gW1" gradientUnits="userSpaceOnUse" cx="1048" cy="372" r="120"><stop offset="0" stop-color="#d07236"/><stop offset=".25" stop-color="#bb5a20"/><stop offset=".7" stop-color="#a34b1a"/><stop offset="1" stop-color="#8a3f16"/></radialGradient>
<linearGradient id="gW2" gradientUnits="userSpaceOnUse" x1="1160" y1="350" x2="1225" y2="440"><stop offset="0" stop-color="#a85020"/><stop offset=".5" stop-color="#b9581f"/><stop offset=".85" stop-color="#a04a18"/><stop offset="1" stop-color="#6e3010"/></linearGradient>
<linearGradient id="gW3" gradientUnits="userSpaceOnUse" x1="1110" y1="470" x2="1180" y2="476"><stop offset="0" stop-color="#a85020"/><stop offset=".35" stop-color="#bb5a20"/><stop offset=".75" stop-color="#94441a"/><stop offset="1" stop-color="#6e3010"/></linearGradient></defs>
<path d="M1061.2 326.2C1069.1 320.8 1076.7 323.4 1082.5 322.5C1088.3 321.6 1091.6 320.7 1096.2 320.8C1100.8 320.9 1105.6 321.3 1110.0 323.0C1114.4 324.7 1118.3 328.2 1122.5 331.2C1126.7 334.2 1130.4 338.8 1135.0 341.2C1139.6 343.6 1143.8 344.9 1150.0 345.5C1156.2 346.1 1165.8 343.3 1172.5 344.5C1179.2 345.7 1184.6 349.1 1190.0 352.5C1195.4 355.9 1200.8 360.4 1205.0 365.0C1209.2 369.6 1212.3 374.6 1215.0 380.0C1217.7 385.4 1220.2 391.7 1221.2 397.5C1222.2 403.3 1222.2 409.2 1221.2 415.0C1220.2 420.8 1217.9 427.1 1215.0 432.5C1212.1 437.9 1208.0 443.3 1203.8 447.5C1199.6 451.7 1194.2 455.4 1190.0 457.5C1185.8 459.6 1180.9 458.6 1178.8 460.0C1176.7 461.4 1179.4 463.5 1177.5 466.2C1175.6 468.9 1174.6 474.5 1167.5 476.2C1160.4 477.9 1144.6 477.4 1135.0 476.2C1125.4 475.0 1118.3 472.3 1110.0 468.8C1101.7 465.3 1092.5 458.6 1085.0 455.0C1077.5 451.4 1072.1 450.8 1065.0 447.5C1057.9 444.2 1048.8 439.6 1042.5 435.0C1036.2 430.4 1031.0 425.0 1027.5 420.0C1024.0 415.0 1022.2 410.0 1021.2 405.0C1020.2 400.0 1021.8 394.2 1021.2 390.0C1020.6 385.8 1015.2 385.8 1017.5 380.0C1019.8 374.2 1027.7 364.0 1035.0 355.0C1042.3 346.0 1053.3 331.6 1061.2 326.2Z" fill="#9a4719" stroke="none"/>
<path d="M1110 462L1111 471A32 15 0 0 0 1177 473L1179 455Z" fill="url(#gW3)"/>
<path d="M1110 462L1125 470L1150 474L1170 470L1179 458L1178 452L1110 450Z" fill="#55260c" stroke="none" opacity=".55"/>
<path d="M1135.0 352.5C1136.0 348.1 1142.5 347.1 1150.0 345.5C1157.5 343.9 1164.5 343.1 1172.5 344.5C1180.5 345.9 1183.5 348.4 1190.0 352.5C1196.5 356.6 1200.0 359.5 1205.0 365.0C1210.0 370.5 1211.8 373.5 1215.0 380.0C1218.2 386.5 1220.0 390.5 1221.2 397.5C1222.4 404.5 1222.4 408.0 1221.2 415.0C1220.0 422.0 1218.5 426.0 1215.0 432.5C1211.5 439.0 1208.8 442.5 1203.8 447.5C1198.8 452.5 1195.0 454.9 1190.0 457.5C1185.0 460.1 1182.3 466.0 1178.8 460.5C1175.3 455.0 1176.3 443.6 1172.5 430.0C1168.7 416.4 1165.5 405.0 1160.0 392.5C1154.5 380.0 1150.0 375.5 1145.0 367.5C1140.0 359.5 1134.0 356.9 1135.0 352.5Z" fill="url(#gW2)" />
<path d="M1136.2 355.0C1136.7 351.8 1145.2 349.8 1152.5 348.8C1159.8 347.8 1165.0 347.3 1172.5 350.0C1180.0 352.7 1183.7 356.0 1190.0 362.5C1196.3 369.0 1199.8 374.0 1203.8 382.5C1207.8 391.0 1209.3 396.0 1210.0 405.0C1210.7 414.0 1210.0 419.5 1207.5 427.5C1205.0 435.5 1202.0 439.5 1197.5 445.0C1193.0 450.5 1188.9 452.8 1185.0 455.0C1181.1 457.2 1179.0 461.2 1178.0 456.2C1177.0 451.2 1180.1 440.2 1180.0 430.0C1179.9 419.8 1180.5 415.0 1177.5 405.0C1174.5 395.0 1170.5 388.0 1165.0 380.0C1159.5 372.0 1155.8 370.0 1150.0 365.0C1144.2 360.0 1135.7 358.2 1136.2 355.0Z" fill="#8a3f16" />
<path d="M1172.5 345.5C1175.8 347.9 1186.7 353.8 1192.5 360.0C1198.3 366.2 1204.0 374.6 1207.5 382.5C1211.0 390.4 1213.4 399.2 1213.8 407.5C1214.2 415.8 1212.7 425.0 1210.0 432.5C1207.3 440.0 1199.6 449.2 1197.5 452.5" fill="none" stroke-width=".7"/>
<path d="M1120.0 365.0L1147.5 362.5L1185.0 397.5L1187.5 415.0L1177.5 430.0L1170.0 420.0L1135.0 390.0Z" fill="#8a3f16" />
<path d="M1120.0 366.2L1135.0 362.5L1147.5 367.5L1143.8 377.5L1132.5 380.0L1125.0 387.5Z" fill="#55260c" />
<path d="M1135.0 387.5L1150.0 383.8L1167.5 390.0L1168.8 422.5L1160.0 415.0L1157.5 402.5L1145.0 397.5Z" fill="#a85020" />
<path d="M1157.5 397.5L1167.5 391.2L1168.8 422.5L1160.0 415.0Z" fill="#6e3010" />
<path d="M1168.8 410.0L1177.5 411.2L1177.5 432.5L1171.2 430.0Z" fill="#d07236" stroke-width=".6"/>
<path d="M1145.0 370.0C1148.3 372.1 1159.2 377.9 1165.0 382.5C1170.8 387.1 1176.5 392.1 1180.0 397.5C1183.5 402.9 1186.2 409.6 1186.2 415.0C1186.2 420.4 1181.0 427.5 1180.0 430.0" fill="none" stroke-width=".7"/>
<path d="M1147.5 376.2C1150.4 378.1 1160.0 383.1 1165.0 387.5C1170.0 391.9 1174.6 397.7 1177.5 402.5C1180.4 407.3 1182.5 412.0 1182.5 416.2C1182.5 420.4 1178.3 425.6 1177.5 427.5" fill="none" stroke-width=".7"/>
<path d="M1061.2 326.2C1067.5 322.9 1076.7 323.4 1082.5 322.5C1088.3 321.6 1091.6 320.7 1096.2 320.8C1100.8 320.9 1105.6 321.3 1110.0 323.0C1114.4 324.7 1118.3 328.2 1122.5 331.2C1126.7 334.2 1130.4 338.8 1135.0 341.2C1139.6 343.6 1149.2 343.6 1150.0 345.5C1150.8 347.4 1144.2 350.9 1140.0 352.5C1135.8 354.1 1128.3 352.9 1125.0 355.0C1121.7 357.1 1122.9 362.1 1120.0 365.0C1117.1 367.9 1113.3 372.9 1107.5 372.5C1101.7 372.1 1091.7 364.6 1085.0 362.5C1078.3 360.4 1075.8 359.6 1067.5 360.0C1059.2 360.4 1038.8 367.9 1035.0 365.0C1031.2 362.1 1040.6 349.0 1045.0 342.5C1049.4 336.0 1055.0 329.5 1061.2 326.2Z" fill="#b5541c" />
<defs><linearGradient id="gWA" gradientUnits="userSpaceOnUse" x1="1055" y1="335" x2="1084" y2="335"><stop offset="0" stop-color="#bb5a20"/><stop offset="1" stop-color="#8f4216"/></linearGradient></defs>
<path d="M1060.0 326.2L1083.8 328.1L1081.2 340.0L1072.5 344.4L1051.2 335.0L1053.1 331.2Z" fill="url(#gWA)" stroke-width=".8"/>
<path d="M1051.2 335.0L1072.5 344.4L1061.2 351.2L1053.1 347.5Z" fill="#c8682e" stroke-width=".8"/>
<path d="M1053.1 347.5L1061.2 351.2L1051.2 354.4L1041.2 352.5Z" fill="#d07236" stroke-width=".7"/>
<path d="M1083.8 328.1L1090.0 322.5L1103.8 321.9L1113.8 326.2L1103.8 331.2L1083.8 341.2L1081.2 340.0Z" fill="#b5541c" stroke-width=".8"/>
<path d="M1083.8 341.2L1103.8 331.2L1123.1 344.4L1110.0 358.1L1096.2 367.5L1077.5 355.0Z" fill="#94441a" stroke-width=".8"/>
<path d="M1085.0 341.9L1111.2 357.5M1077.5 355.0L1085.0 341.9" fill="none" stroke-width=".7"/>
<path d="M1123.1 344.4L1126.9 345.6L1126.2 353.8L1110.0 368.8L1106.2 365.0L1110.0 358.1Z" fill="#7a3612" stroke-width=".8"/>
<path d="M1103.8 331.2L1113.8 326.2L1125.0 332.5L1135.0 340.6L1147.5 344.4L1135.0 352.5L1126.9 345.6L1123.1 344.4Z" fill="#a85020" stroke-width=".8"/>
<path d="M1126.2 345.6L1146.2 346.2L1135.0 353.1L1127.5 352.5Z" fill="#c8682e" stroke-width=".7"/>
<path d="M1117.5 368.8L1127.5 365.0L1145.0 363.8L1145.6 372.5L1135.0 380.0L1125.0 390.0L1123.1 380.0Z" fill="#55260c" stroke-width=".8"/>
<path d="M1118.1 368.8L1127.5 365.6L1123.1 379.4Z" fill="#7a3612" stroke-width=".7"/>
<path d="M1126.2 353.8L1135.0 353.1L1145.0 363.8L1127.5 365.0L1118.8 368.1L1110.0 368.8Z" fill="#b5541c" stroke-width=".7"/>
<path d="M1021.2 380.0C1023.7 372.9 1026.5 369.9 1035.0 366.2C1043.5 362.5 1058.3 360.4 1067.5 360.0C1076.7 359.6 1077.2 360.6 1085.0 363.8C1092.8 367.0 1100.8 371.3 1110.0 377.5C1119.2 383.7 1126.3 389.7 1135.0 397.5C1143.7 405.3 1150.6 412.2 1157.5 420.0C1164.4 427.8 1168.6 433.6 1172.5 440.0C1176.4 446.4 1177.9 450.2 1178.8 455.0C1179.7 459.8 1179.6 462.3 1177.5 466.2C1175.4 470.1 1172.5 474.1 1167.5 476.2C1162.5 478.3 1156.0 477.5 1150.0 477.5C1144.0 477.5 1142.3 477.8 1135.0 476.2C1127.7 474.6 1119.2 472.7 1110.0 468.8C1100.8 464.9 1093.2 458.9 1085.0 455.0C1076.8 451.1 1072.8 451.2 1065.0 447.5C1057.2 443.8 1049.4 440.0 1042.5 435.0C1035.6 430.0 1031.4 425.5 1027.5 420.0C1023.6 414.5 1022.4 412.3 1021.2 405.0C1020.0 397.7 1018.7 387.1 1021.2 380.0Z" fill="url(#gW1)" />
<path d="M1067.5 366.2C1065.4 370.6 1060.0 382.3 1055.0 392.5C1050.0 402.7 1040.4 421.7 1037.5 427.5" fill="none" stroke-width=".7"/>
<path d="M1110.0 400.0C1107.5 404.6 1099.2 418.8 1095.0 427.5C1090.8 436.2 1086.7 448.3 1085.0 452.5" fill="none" stroke-width=".7"/>
<path d="M1035.0 367.5C1040.4 366.9 1058.3 363.0 1067.5 363.8C1076.7 364.6 1082.1 368.1 1090.0 372.5C1097.9 376.9 1106.7 383.3 1115.0 390.0C1123.3 396.7 1132.5 405.0 1140.0 412.5C1147.5 420.0 1154.6 427.9 1160.0 435.0C1165.4 442.1 1170.2 449.6 1172.5 455.0C1174.8 460.4 1173.6 465.4 1173.8 467.5" fill="none" stroke-width=".7"/>
<path d="M1032.5 370.5C1038.1 370.0 1057.0 366.6 1066.2 367.5C1075.4 368.4 1080.0 371.8 1087.5 376.2C1095.0 380.6 1103.3 387.1 1111.2 393.8C1119.1 400.5 1127.7 408.7 1135.0 416.2C1142.3 423.7 1149.6 431.7 1155.0 438.8C1160.4 445.9 1165.1 453.4 1167.5 458.8C1169.9 464.2 1169.2 469.1 1169.5 471.2" fill="none" stroke-width=".7"/>
<ellipse cx="1120" cy="444" rx="26" ry="25" fill="none" stroke-width=".8"/>
</g><defs><radialGradient id="gTShade" gradientUnits="userSpaceOnUse" cx="692" cy="548" r="62"><stop offset="0" stop-color="#2e160a" stop-opacity=".95"/><stop offset=".45" stop-color="#2e160a" stop-opacity=".5"/><stop offset="1" stop-color="#2e160a" stop-opacity="0"/></radialGradient></defs>
<path d="M600 500L690 470L702 486L698 521L696 540L690 542.500L660 556L622.500 562.500L600 561Z" fill="url(#gTShade)" stroke="none"/>
<g id="facets"><!-- light facets bottom right -->
<path d="M697 520L717 522L738.700 522.500L720 541L717.500 551L712.500 552.500L705 549L696 540Z" fill="#b9581f"/>
<path d="M697 520L703 528L697 535M703 528L712 518M700 540L722 527L738 523M697 531L716 538" fill="none" stroke-width=".7"/>
<path d="M696 540L705 549L712.500 552.500L717.500 551L718 546L705 543Z" fill="#7a3612"/>
</g>
<g id="triad" stroke="none">
<path d="M843.700 369.500L845 350" stroke="#30e0f0" stroke-width="1.200"/><circle cx="845" cy="348" r="3.200" fill="#30e8f8"/>
<path d="M843.700 369.500L852 361" stroke="#30d030" stroke-width="1.200"/><circle cx="853" cy="360" r="2.400" fill="#30d838"/>
<path d="M843.700 369.500L864 374" stroke="#f03030" stroke-width="1.200"/><circle cx="865.700" cy="374.500" r="2.800" fill="#f83838"/>
</g>

</g>
</svg>

<div id="tab2" class="tab"></div><div id="tab3" class="tab"></div>
<div id="panel" class="abs"></div>
<div id="tab1" class="tab"></div>
<svg class="abs" style="left:0;top:0;z-index:5" width="100" height="46" viewBox="0 0 100 46">
<g fill="#fafafa" stroke="#3a3a3a" stroke-width="1.1"><path d="M14.5 22v14M14.5 29.5h8" fill="none" stroke="#666"/><rect x="12.5" y="20.5" width="4" height="4"/><rect x="12.5" y="27.5" width="4" height="4"/><rect x="12.5" y="34.500" width="4" height="4"/><rect x="20.5" y="27.500" width="4" height="4"/></g>
<g stroke="#333" stroke-width="0.9"><path d="M39.500 30.500v-8l1.500-2h5l1.500 2h3v8z" fill="#f5ec4a"/><path d="M42.500 34.500v-8l1.500-2h5l1.500 2h3v8z" fill="#f5ec4a"/><path d="M45.500 38.500v-8l1.500-2h5l1.500 2h3v8z" fill="#f5ec4a"/><rect x="47" y="33" width="8" height="4.500" fill="#fbf6a0" stroke="none"/></g>
<g stroke="#333" stroke-width="0.9"><path d="M69.500 37.500v-12l1.500-2h6l1.500 2h7v12z" fill="#f5ec4a"/><rect x="71" y="27" width="13" height="9" fill="#fbf6a0" stroke="none"/><path d="M74.500 31.500h6M77.500 28.500v6M75.400 29.400l4.200 4.200M79.600 29.400l-4.200 4.200" stroke="#1a1ae0" stroke-width="1" fill="none"/></g>
</svg>
<div id="title" class="abs">模型树</div>
<svg class="abs" style="left:254px;top:44px" width="96" height="62" viewBox="254 44 96 62">
<g><path d="M268 57l4-3h7l1 1.500-3 .5-5 0-2 2z" fill="#ddd" stroke="#555" stroke-width=".8"/><rect x="271.500" y="57" width="3" height="11" fill="#e08020" stroke="#8a2a00" stroke-width=".8"/><rect x="279.500" y="55" width="3" height="12" fill="#3a7ad8" stroke="#234a90" stroke-width=".8"/><path d="M279 55l-1-3 1.500-2.500 1 2 1.500 0 1-2 1.500 2.500-1 3z" fill="#ccc" stroke="#555" stroke-width=".8"/></g>
<path d="M294 56h6l-3 3.500z" fill="#444"/>
<g><path d="M311.500 49.500h11l4 4v14h-15z" fill="#fff" stroke="#555" stroke-width="1"/><path d="M322.500 49.500v4h4" fill="none" stroke="#555" stroke-width=".8"/><g fill="none" stroke="#444" stroke-width=".9"><circle cx="315" cy="54" r="1.200"/><circle cx="315" cy="58.500" r="1.200"/><circle cx="315" cy="63" r="1.200"/><path d="M318 54h4M318 58.500h6M318 63h6"/></g></g>
<path d="M337 56h6l-3 3.500z" fill="#444"/>
<path d="M258 86h6l-3 3.500z" fill="#444"/>
<g fill="#222"><path d="M276 82h3l.5 3 .5 5v6h-5v-6z"/><path d="M284 82h3l1.500 8v6h-5v-6l.5-5z"/><rect x="279" y="86" width="5" height="4"/><rect x="277" y="90" width="1.300" height="5" fill="#ccc"/><rect x="285.500" y="90" width="1.300" height="5" fill="#ccc"/></g>
<path d="M301.500 83.500h14l-5.500 6.500v7l-3-1.500v-5.500z" fill="#e6e6e6" stroke="#b4b4b4" stroke-width="1"/>
<path d="M334 84.500h3v4h4v3h-4v4h-3v-4h-4v-3h4z" fill="#9a9a9a"/>
</svg>
<div id="search" class="abs"><i></i></div>
<svg class="abs" style="left:229px;top:80px" width="12" height="12" viewBox="0 0 12 12"><path d="M2.500 2.500l7 7M9.500 2.500l-7 7" stroke="#777" stroke-width="1.100" fill="none"/></svg>
<div id="tree" class="abs">
<div class="row" style="top:0px"><svg width="16" height="16" viewBox="0 0 16 16" style="left:3.500px;top:5.500px"><path d="M1.500 3.500l2-2h10v10l-2 2h-10z" fill="#f7e45a" stroke="#8a7a20" stroke-width="1"/><rect x="5" y="2" width="8" height="8" fill="#7fe0e8" stroke="#2a6a80" stroke-width=".8"/><path d="M1.500 13.500v-10h10v10z" fill="none" stroke="#b09a30" stroke-width=".5"/><rect x="2" y="10.500" width="9" height="3" fill="#f3e39a" stroke="none"/></svg><span style="left:22px;transform:scaleX(1.0)">ASM0002.ASM</span></div>
<div class="row" style="top:26px"><svg width="15" height="14" viewBox="0 0 15 14" style="left:23.500px;top:7px"><path d="M1.500 3.500l2-2h9.500v8l-2 2h-9.500z" fill="#8fecf0" stroke="#4a5a66" stroke-width="1"/><path d="M11 3.500l2-2v8l-2 2z" fill="#3a8a9a" stroke="#4a5a66" stroke-width=".6"/><rect x="2" y="4" width="8.500" height="7" fill="#8ff0f2"/></svg><span style="left:41.500px;transform:scaleX(0.959)">IRB7600_35_150_M2000_REV1_01.PRT</span></div>
<div class="row" style="top:52px"><svg width="15" height="14" viewBox="0 0 15 14" style="left:23.500px;top:7px"><path d="M1.500 3.500l2-2h9.500v8l-2 2h-9.500z" fill="#8fecf0" stroke="#4a5a66" stroke-width="1"/><path d="M11 3.500l2-2v8l-2 2z" fill="#3a8a9a" stroke="#4a5a66" stroke-width=".6"/><rect x="2" y="4" width="8.500" height="7" fill="#8ff0f2"/></svg><span style="left:41.500px;transform:scaleX(0.959)">IRB7600_35_150_M2000_REV1_01.PRT</span></div>
<div class="row" style="top:78px"><svg width="15" height="14" viewBox="0 0 15 14" style="left:23.500px;top:7px"><path d="M1.500 3.500l2-2h9.500v8l-2 2h-9.500z" fill="#8fecf0" stroke="#4a5a66" stroke-width="1"/><path d="M11 3.500l2-2v8l-2 2z" fill="#3a8a9a" stroke="#4a5a66" stroke-width=".6"/><rect x="2" y="4" width="8.500" height="7" fill="#8ff0f2"/></svg><span style="left:41.500px;transform:scaleX(0.959)">IRB7600_35_150_M2000_REV1_01.PRT</span></div>
<div class="row" style="top:104px"><svg width="15" height="14" viewBox="0 0 15 14" style="left:23.500px;top:7px"><path d="M1.500 3.500l2-2h9.500v8l-2 2h-9.500z" fill="#8fecf0" stroke="#4a5a66" stroke-width="1"/><path d="M11 3.500l2-2v8l-2 2z" fill="#3a8a9a" stroke="#4a5a66" stroke-width=".6"/><rect x="2" y="4" width="8.500" height="7" fill="#8ff0f2"/></svg><span style="left:41.500px;transform:scaleX(0.959)">IRB7600_35_150_M2000_REV1_01.PRT</span></div>
<div class="row" style="top:130px"><svg width="15" height="14" viewBox="0 0 15 14" style="left:23.500px;top:7px"><path d="M1.500 3.500l2-2h9.500v8l-2 2h-9.500z" fill="#8fecf0" stroke="#4a5a66" stroke-width="1"/><path d="M11 3.500l2-2v8l-2 2z" fill="#3a8a9a" stroke="#4a5a66" stroke-width=".6"/><rect x="2" y="4" width="8.500" height="7" fill="#8ff0f2"/></svg><span style="left:41.500px;transform:scaleX(0.959)">IRB7600_35_150_M2000_REV1_01.PRT</span></div>
<div class="row" style="top:156px"><svg width="15" height="14" viewBox="0 0 15 14" style="left:23.500px;top:7px"><path d="M1.500 3.500l2-2h9.500v8l-2 2h-9.500z" fill="#8fecf0" stroke="#4a5a66" stroke-width="1"/><path d="M11 3.500l2-2v8l-2 2z" fill="#3a8a9a" stroke="#4a5a66" stroke-width=".6"/><rect x="2" y="4" width="8.500" height="7" fill="#8ff0f2"/></svg><span style="left:41.500px;transform:scaleX(0.959)">IRB7600_35_150_M2000_REV1_01.PRT</span></div>
<div class="row" style="top:182px"><svg width="15" height="14" viewBox="0 0 15 14" style="left:23.500px;top:7px"><path d="M1.500 3.500l2-2h9.500v8l-2 2h-9.500z" fill="#8fecf0" stroke="#4a5a66" stroke-width="1"/><path d="M11 3.500l2-2v8l-2 2z" fill="#3a8a9a" stroke="#4a5a66" stroke-width=".6"/><rect x="2" y="4" width="8.500" height="7" fill="#8ff0f2"/></svg><span style="left:41.500px;transform:scaleX(0.959)">IRB7600_35_150_M2000_REV1_01.PRT</span></div>
<div class="row" style="top:208px"><svg width="15" height="14" viewBox="0 0 15 14" style="left:23.500px;top:7px"><path d="M1.500 3.500l2-2h9.500v8l-2 2h-9.500z" fill="#8fecf0" stroke="#4a5a66" stroke-width="1"/><path d="M11 3.500l2-2v8l-2 2z" fill="#3a8a9a" stroke="#4a5a66" stroke-width=".6"/><rect x="2" y="4" width="8.500" height="7" fill="#8ff0f2"/></svg><span style="left:41.500px;transform:scaleX(0.959)">IRB7600_35_150_M2000_REV1_01.PRT</span></div>
<div class="row" style="top:234px"><svg width="15" height="14" viewBox="0 0 15 14" style="left:23.500px;top:7px"><path d="M1.500 3.500l2-2h9.500v8l-2 2h-9.500z" fill="#8fecf0" stroke="#4a5a66" stroke-width="1"/><path d="M11 3.500l2-2v8l-2 2z" fill="#3a8a9a" stroke="#4a5a66" stroke-width=".6"/><rect x="2" y="4" width="8.500" height="7" fill="#8ff0f2"/></svg><span style="left:41.500px;transform:scaleX(0.959)">IRB7600_35_150_M2000_REV1_01.PRT</span></div>
<div class="row" style="top:260px"><svg width="15" height="14" viewBox="0 0 15 14" style="left:23.500px;top:7px"><path d="M1.500 3.500l2-2h9.500v8l-2 2h-9.500z" fill="#8fecf0" stroke="#4a5a66" stroke-width="1"/><path d="M11 3.500l2-2v8l-2 2z" fill="#3a8a9a" stroke="#4a5a66" stroke-width=".6"/><rect x="2" y="4" width="8.500" height="7" fill="#8ff0f2"/></svg><span style="left:41.500px;transform:scaleX(0.959)">IRB7600_35_150_M2000_REV1_01.PRT</span></div>
<div class="row" style="top:286px"><svg width="15" height="14" viewBox="0 0 15 14" style="left:23.500px;top:7px"><path d="M1.500 3.500l2-2h9.500v8l-2 2h-9.500z" fill="#8fecf0" stroke="#4a5a66" stroke-width="1"/><path d="M11 3.500l2-2v8l-2 2z" fill="#3a8a9a" stroke="#4a5a66" stroke-width=".6"/><rect x="2" y="4" width="8.500" height="7" fill="#8ff0f2"/></svg><span style="left:41.500px;transform:scaleX(0.959)">IRB7600_35_150_M2000_REV1_01.PRT</span></div>
<div class="row" style="top:312px"><svg width="15" height="14" viewBox="0 0 15 14" style="left:23.500px;top:7px"><path d="M1.500 3.500l2-2h9.500v8l-2 2h-9.500z" fill="#8fecf0" stroke="#4a5a66" stroke-width="1"/><path d="M11 3.500l2-2v8l-2 2z" fill="#3a8a9a" stroke="#4a5a66" stroke-width=".6"/><rect x="2" y="4" width="8.500" height="7" fill="#8ff0f2"/></svg><span style="left:41.500px;transform:scaleX(0.897)">1.PRT</span></div>
<div class="row" style="top:338px"><svg width="15" height="14" viewBox="0 0 15 14" style="left:23.500px;top:7px"><path d="M1.500 3.500l2-2h9.500v8l-2 2h-9.500z" fill="#8fecf0" stroke="#4a5a66" stroke-width="1"/><path d="M11 3.500l2-2v8l-2 2z" fill="#3a8a9a" stroke="#4a5a66" stroke-width=".6"/><rect x="2" y="4" width="8.500" height="7" fill="#8ff0f2"/></svg><span style="left:41.500px;transform:scaleX(0.979)">OP-87460.PRT</span></div>
<div class="row" style="top:364px"><svg width="15" height="14" viewBox="0 0 15 14" style="left:23.500px;top:7px"><path d="M1.500 3.500l2-2h9.500v8l-2 2h-9.500z" fill="#8fecf0" stroke="#4a5a66" stroke-width="1"/><path d="M11 3.500l2-2v8l-2 2z" fill="#3a8a9a" stroke="#4a5a66" stroke-width=".6"/><rect x="2" y="4" width="8.500" height="7" fill="#8ff0f2"/></svg><span style="left:41.500px;transform:scaleX(0.973)">IV-D10.PRT</span></div>
<div class="row" style="top:390px"><svg width="15" height="14" viewBox="0 0 15 14" style="left:23.500px;top:7px"><path d="M1.500 3.500l2-2h9.500v8l-2 2h-9.500z" fill="#8fecf0" stroke="#4a5a66" stroke-width="1"/><path d="M11 3.500l2-2v8l-2 2z" fill="#3a8a9a" stroke="#4a5a66" stroke-width=".6"/><rect x="2" y="4" width="8.500" height="7" fill="#8ff0f2"/></svg><span style="left:41.500px;transform:scaleX(0.979)">IV-150_500_2000.PRT</span></div>
<div class="row" style="top:416px"><svg width="15" height="14" viewBox="0 0 15 14" style="left:23.500px;top:7px"><path d="M1.500 3.500l2-2h9.500v8l-2 2h-9.500z" fill="#8fecf0" stroke="#4a5a66" stroke-width="1"/><path d="M11 3.500l2-2v8l-2 2z" fill="#3a8a9a" stroke="#4a5a66" stroke-width=".6"/><rect x="2" y="4" width="8.500" height="7" fill="#8ff0f2"/></svg><span style="left:41.500px;transform:scaleX(0.979)">OP-87461.PRT</span></div>
<div class="row" style="top:442px"><svg width="15" height="14" viewBox="0 0 15 14" style="left:23.500px;top:7px"><path d="M1.500 3.500l2-2h9.500v8l-2 2h-9.500z" fill="#8fecf0" stroke="#4a5a66" stroke-width="1"/><path d="M11 3.500l2-2v8l-2 2z" fill="#3a8a9a" stroke="#4a5a66" stroke-width=".6"/><rect x="2" y="4" width="8.500" height="7" fill="#8ff0f2"/></svg><span style="left:41.500px;transform:scaleX(0.898)">BRACKET_FOR_VISION_SENSOR.PRT</span></div>
<div class="row" style="top:468px"><svg width="15" height="14" viewBox="0 0 15 14" style="left:23.500px;top:7px"><path d="M1.500 3.500l2-2h9.500v8l-2 2h-9.500z" fill="#8fecf0" stroke="#4a5a66" stroke-width="1"/><path d="M11 3.500l2-2v8l-2 2z" fill="#3a8a9a" stroke="#4a5a66" stroke-width=".6"/><rect x="2" y="4" width="8.500" height="7" fill="#8ff0f2"/></svg><span style="left:41.500px;transform:scaleX(0.898)">SOCKET_HEAD_CAP_SCREW_AM_B18</span></div>
<div class="row" style="top:494px"><svg width="15" height="14" viewBox="0 0 15 14" style="left:23.500px;top:7px"><path d="M1.500 3.500l2-2h9.500v8l-2 2h-9.500z" fill="#8fecf0" stroke="#4a5a66" stroke-width="1"/><path d="M11 3.500l2-2v8l-2 2z" fill="#3a8a9a" stroke="#4a5a66" stroke-width=".6"/><rect x="2" y="4" width="8.500" height="7" fill="#8ff0f2"/></svg><span style="left:41.500px;transform:scaleX(0.898)">SOCKET_HEAD_CAP_SCREW_AM_B18</span></div>
<div class="row" style="top:520px"><svg width="15" height="14" viewBox="0 0 15 14" style="left:23.500px;top:7px"><path d="M1.500 3.500l2-2h9.500v8l-2 2h-9.500z" fill="#8fecf0" stroke="#4a5a66" stroke-width="1"/><path d="M11 3.500l2-2v8l-2 2z" fill="#3a8a9a" stroke="#4a5a66" stroke-width=".6"/><rect x="2" y="4" width="8.500" height="7" fill="#8ff0f2"/></svg><span style="left:41.500px;transform:scaleX(0.898)">SOCKET_HEAD_CAP_SCREW_AM_B18</span></div>
<div class="row" style="top:546px"><svg width="15" height="14" viewBox="0 0 15 14" style="left:23.500px;top:7px"><path d="M1.500 3.500l2-2h9.500v8l-2 2h-9.500z" fill="#8fecf0" stroke="#4a5a66" stroke-width="1"/><path d="M11 3.500l2-2v8l-2 2z" fill="#3a8a9a" stroke="#4a5a66" stroke-width=".6"/><rect x="2" y="4" width="8.500" height="7" fill="#8ff0f2"/></svg><span style="left:41.500px;transform:scaleX(0.898)">SOCKET_HEAD_CAP_SCREW_AM_B18</span></div>
<div class="row" style="top:572px"><svg width="15" height="14" viewBox="0 0 15 14" style="left:23.500px;top:7px"><path d="M1.500 3.500l2-2h9.500v8l-2 2h-9.500z" fill="#8fecf0" stroke="#4a5a66" stroke-width="1"/><path d="M11 3.500l2-2v8l-2 2z" fill="#3a8a9a" stroke="#4a5a66" stroke-width=".6"/><rect x="2" y="4" width="8.500" height="7" fill="#8ff0f2"/></svg><span style="left:41.500px;transform:scaleX(0.9055)">FLAT_WASHER_REGULAR_AM_B18</span></div>
<div class="row" style="top:598px"><svg width="15" height="14" viewBox="0 0 15 14" style="left:23.500px;top:7px"><path d="M1.500 3.500l2-2h9.500v8l-2 2h-9.500z" fill="#8fecf0" stroke="#4a5a66" stroke-width="1"/><path d="M11 3.500l2-2v8l-2 2z" fill="#3a8a9a" stroke="#4a5a66" stroke-width=".6"/><rect x="2" y="4" width="8.500" height="7" fill="#8ff0f2"/></svg><span style="left:41.500px;transform:scaleX(0.9055)">FLAT_WASHER_REGULAR_AM_B18</span></div>
<div class="row" style="top:624px"><svg width="15" height="14" viewBox="0 0 15 14" style="left:23.500px;top:7px"><path d="M1.500 3.500l2-2h9.500v8l-2 2h-9.500z" fill="#8fecf0" stroke="#4a5a66" stroke-width="1"/><path d="M11 3.500l2-2v8l-2 2z" fill="#3a8a9a" stroke="#4a5a66" stroke-width=".6"/><rect x="2" y="4" width="8.500" height="7" fill="#8ff0f2"/></svg><span style="left:41.500px;transform:scaleX(0.898)">SOCKET_HEAD_CAP_SCREW_AM_B18</span></div>
<div class="row" style="top:650px"><svg width="15" height="14" viewBox="0 0 15 14" style="left:23.500px;top:7px"><path d="M1.500 3.500l2-2h9.500v8l-2 2h-9.500z" fill="#8fecf0" stroke="#4a5a66" stroke-width="1"/><path d="M11 3.500l2-2v8l-2 2z" fill="#3a8a9a" stroke="#4a5a66" stroke-width=".6"/><rect x="2" y="4" width="8.500" height="7" fill="#8ff0f2"/></svg><span style="left:41.500px;transform:scaleX(0.898)">SOCKET_HEAD_CAP_SCREW_AM_B18</span></div>
</div>
<div id="sb" class="abs"></div>
<svg class="abs" style="left:328px;top:109px" width="19" height="676" viewBox="328 109 19 676">
<rect x="329.500" y="110.500" width="16" height="17" fill="#f4f4f4" stroke="#d0d0d0"/><path d="M334 121h7l-3.500-4.500z" fill="#444"/>
<rect x="329.500" y="129.500" width="16" height="580" rx="1.500" fill="#f2f2f2" stroke="#cfcfcf"/>
<rect x="331" y="131" width="6" height="577" fill="#fbfbfb"/>
<path d="M334 411.500h7M334 413.500h7M334 415.500h7M334 417.500h7" stroke="#aaa" stroke-width="1"/>
<rect x="329.500" y="760.500" width="16" height="16" fill="#f4f4f4" stroke="#d0d0d0"/><path d="M334 766h7l-3.500 4.500z" fill="#444"/>
</svg>
<div class="abs" style="left:5px;top:777px;width:341px;height:8px;background:#f0f0f0;border-top:1px solid #d0d0d0"></div>
<svg class="abs" style="left:4px;top:777px" width="342" height="8" viewBox="4 777 342 8">
<path d="M15 781l-4 4h4z" fill="#444"/><path d="M318 781l4 4h-4z" fill="#444"/>
<rect x="27.500" y="778.500" width="206" height="8" fill="#f2f2f2" stroke="#cfcfcf"/>
<path d="M126.500 782v3M128.500 782v3M130.500 782v3M132.500 782v3" stroke="#aaa"/>
</svg>
<div class="abs" style="left:991px;top:9px;width:284px;height:28px;box-sizing:border-box;border:1px solid #c4c8cc;background:#fdfdfd"></div>
<div class="abs" style="left:992px;top:10px;width:5px;height:26px;background:#ececee;border-right:1px solid #d4d6da"></div>
<div class="abs" style="left:1269px;top:10px;width:5px;height:26px;background:#ececee;border-left:1px solid #d4d6da"></div>
<svg class="abs" style="left:991px;top:9px" width="284" height="28" viewBox="991 9 284 28">
<g stroke="#d8dade" stroke-width="1"><path d="M1023.500 10v26M1050.500 10v26M1077.500 10v26M1104.500 10v26M1132.500 10v26M1160.500 10v26M1187.500 10v26"/></g>
<rect x="1216.500" y="11.500" width="25" height="23" fill="#e9e9eb" stroke="#c6c8cc"/><rect x="1217" y="12" width="24" height="3" fill="#d2d4d8"/>
<rect x="1244.500" y="11.500" width="24" height="23" fill="#e9e9eb" stroke="#c6c8cc"/><rect x="1245" y="12" width="23" height="3" fill="#d2d4d8"/>
<!-- zoom window -->
<rect x="1003" y="16" width="13" height="12" fill="#fff" stroke="#1a3a9a" stroke-width="1.300"/><circle cx="1009.500" cy="21.500" r="4.500" fill="#fff" stroke="#555" stroke-width="1.300"/><path d="M1013 25l4.500 4.500" stroke="#8a4a2a" stroke-width="2"/>
<!-- zoom in -->
<circle cx="1035.500" cy="21" r="5.500" fill="#fff" stroke="#666" stroke-width="1.200"/><path d="M1032.500 21h6M1035.500 18v6" stroke="#222" stroke-width="1.600"/><path d="M1039.500 25l5 5" stroke="#8a4a2a" stroke-width="2"/>
<!-- zoom out -->
<circle cx="1062.500" cy="21" r="5.500" fill="#fff" stroke="#666" stroke-width="1.200"/><path d="M1059.500 21h6" stroke="#222" stroke-width="1.600"/><path d="M1066.500 25l5 5" stroke="#8a4a2a" stroke-width="2"/>
<!-- repaint -->
<rect x="1085" y="17" width="13" height="14" fill="#c8d8f0" stroke="#1a3a9a" stroke-width="1.300"/><path d="M1086 30l10-12v12z" fill="#7a9ad0"/><path d="M1088 30c2-5 5-8 9-10" stroke="#1a2a7a" stroke-width="1.300" fill="none"/>
<!-- box -->
<path d="M1112.500 21.500l3-3.500h11v10l-3 3.500h-11z" fill="#fff" stroke="#111" stroke-width="1.300"/><path d="M1115.500 18h11v10l-3 3.500v-10h-11z" fill="#5cc8d0" stroke="#111" stroke-width="1"/><rect x="1112.500" y="21.500" width="11" height="10" fill="#fff" stroke="#111" stroke-width="1.300"/><path d="M1130 30v3h-3z" fill="#666"/>
<!-- AB -->
<path d="M1146 20.500h-6.500l-1.500 2v9h13l1.500-2v-2" fill="none" stroke="#666" stroke-width="1.100"/><path d="M1141 20.500h5v2h-7z" fill="#9ae0e8"/><path d="M1148 31.500l3-1.500v-3h-3z" fill="#2aa0a8"/>
<g stroke="#222" stroke-width="1.100" fill="none"><path d="M1145.500 23v-5l1-1.500h1.500l1 1.500v5M1145.500 20.500h3.500"/><path d="M1151.500 23v-6.500h2c2 0 2 3 0 3h-2 2.300c2 0 2 3.500 0 3.500z"/></g><path d="M1158 30v3h-3z" fill="#666"/>
<!-- camera -->
<path d="M1166.500 31v-15h12v8" fill="#fff" stroke="#555" stroke-width="1"/><path d="M1169 19h7" stroke="#999" stroke-width=".8"/><rect x="1170" y="24" width="13" height="9" rx="1" fill="#d8d4c0" stroke="#222" stroke-width="1.200"/><rect x="1173" y="22.500" width="5" height="2" fill="#333"/><rect x="1174" y="26" width="5" height="5" fill="#eee" stroke="#111" stroke-width="1.200"/>
<!-- datum display xx -->
<g stroke="#8a3a10" stroke-width="1.400" fill="none"><path d="M1194 15l4 4M1198 15l-4 4M1202 15.500l1.500-2M1199 23.500l1.500-2M1196.500 29l1.500-2M1201 20l8 9M1209 20l-6 10M1200 26h10"/></g><path d="M1214 30v3h-3z" fill="#666"/>
<!-- annotation display -->
<rect x="1220" y="15" width="9" height="4" fill="#f4f0a0" stroke="#555" stroke-width=".8"/><path d="M1230 17h4.500l-4.500 6h5" stroke="#222" stroke-width="1.100" fill="none"/><ellipse cx="1231.500" cy="28" rx="5.500" ry="2.800" fill="#ddd" stroke="#666" stroke-width=".8"/><circle cx="1231.500" cy="28" r="2" fill="#5a7ab0"/>
<!-- spin center -->
<path d="M1251.500 17.500l4 6.500-4 6M1255.500 24h9" stroke="#222" stroke-width="1.100" fill="none"/><circle cx="1251.500" cy="16.500" r="2.800" fill="#10c020" stroke="#063"/><circle cx="1264" cy="24" r="2.800" fill="#e01010" stroke="#600"/><circle cx="1251.500" cy="31" r="2.800" fill="#20d8e8" stroke="#067"/>
</svg>

</body>
</html>
